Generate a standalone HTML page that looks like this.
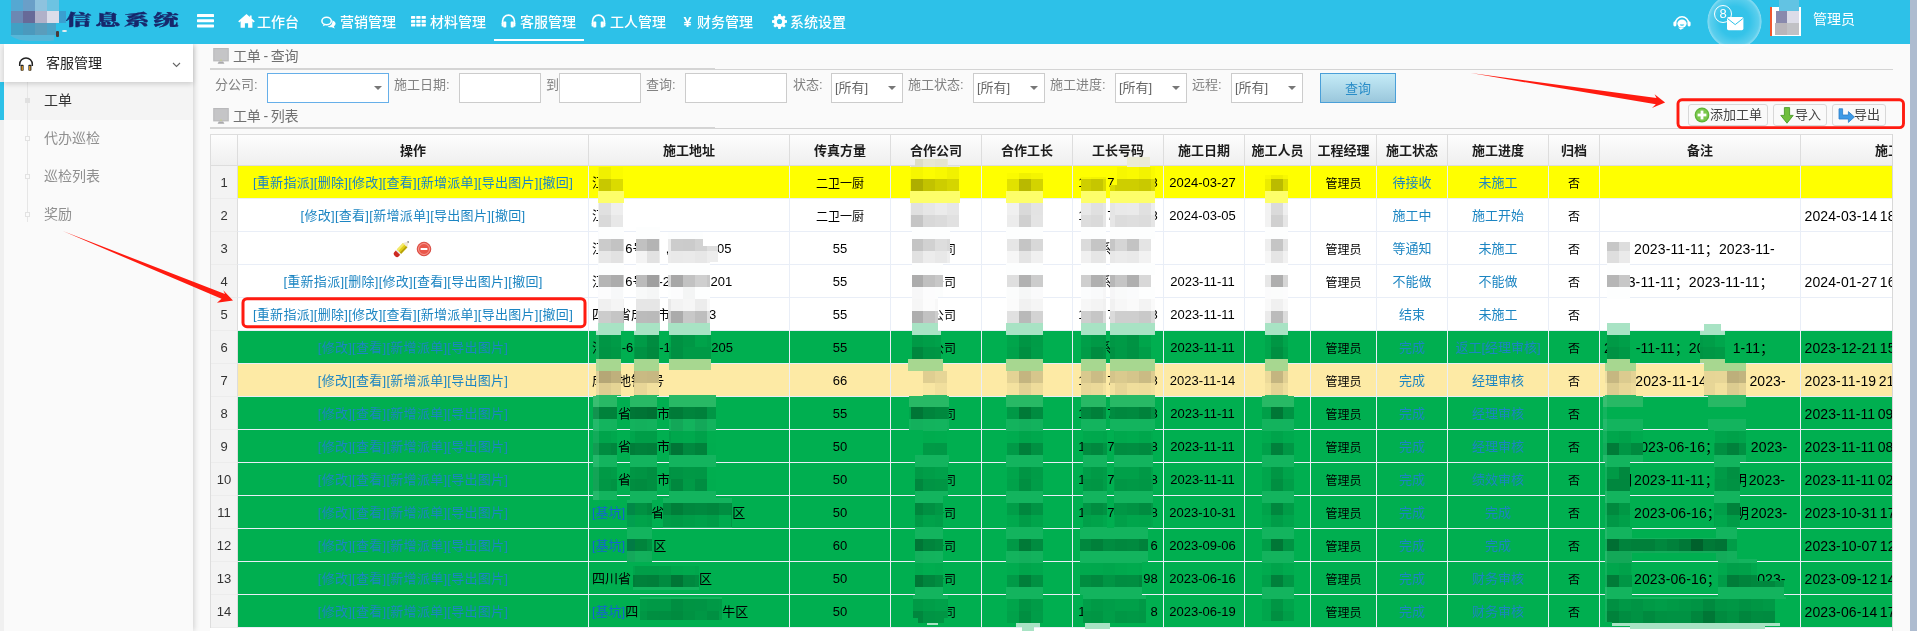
<!DOCTYPE html>
<html lang="zh-CN">
<head>
<meta charset="utf-8">
<title>信息系统</title>
<style>
*{box-sizing:border-box;margin:0;padding:0}
html,body{width:1917px;height:631px;overflow:hidden;background:#fafafa}
body{will-change:transform;position:relative;font-family:"Liberation Sans","Noto Sans CJK SC",sans-serif;font-size:12px;color:#000}
a{color:#1c85c2;text-decoration:none}
.abs{position:absolute}
/* ---------- header ---------- */
#hd{position:absolute;left:0;top:0;width:1910px;height:44px;background:#2dc1e8;z-index:5}
#sb-strip{position:absolute;left:1910px;top:0;width:7px;height:631px;background:#aebcd0}
#logo-t{position:absolute;left:66px;top:7px;font-family:"Noto Serif CJK SC","Liberation Serif",serif;font-weight:900;font-size:14.5px;letter-spacing:2.1px;color:#17276b;white-space:nowrap;transform:scaleX(1.75);transform-origin:0 50%;line-height:24px;-webkit-text-stroke:.35px #17276b}
.nav{position:absolute;top:0;height:44px;line-height:44px;color:#fff;font-size:14px;white-space:nowrap}
.nav svg{position:absolute;top:14px}
.nav span{position:absolute;top:-.5px;font-weight:500}
#nav-ul{position:absolute;left:494px;top:39px;width:90px;height:2px;background:#fff}
/* ---------- sidebar ---------- */
#side{position:absolute;left:0;top:44px;width:193px;height:587px;background:#fafafa;box-shadow:1px 0 6px rgba(0,0,0,.18)}
#side-l{position:absolute;left:0;top:0;width:4px;height:587px;background:#f0f0f0}
#side-p{position:absolute;left:4px;top:0;width:189px;height:38px;background:#fff;box-shadow:0 2px 5px rgba(0,0,0,.16);font-size:14px;line-height:38px;color:#222;z-index:2}
#side-a{position:absolute;left:0;top:38px;width:193px;height:38px;background:#f4f4f4;border-left:4px solid #2dc1e8}
.si{position:absolute;left:44px;font-size:14px;line-height:36px;height:38px;color:#8f8f8f;white-space:nowrap}
.si.on{color:#333}
#tree{position:absolute;left:27px;top:38px;width:1px;height:140px;background:#e6e6e6}
.tb{position:absolute;left:25px;width:5px;height:5px;border:1px solid #e2e2e2;background:#fafafa}
.tb.on{background:#e0e0e0;border-color:#e0e0e0}
/* ---------- content ---------- */
.sec{position:absolute;left:233px;font-size:14px;color:#707070;line-height:20px;white-space:nowrap;word-spacing:-1px;letter-spacing:-.15px}
.hr{position:absolute;left:210px;height:1px;background:#d4d4d4}
.lb{position:absolute;top:73px;height:29px;line-height:23px;font-size:13px;color:#828282;white-space:nowrap}
.ip{position:absolute;top:73px;height:30px;background:#fff;border:1px solid #ccc}
.sel{position:absolute;top:73px;height:30px;background:#fff;border:1px solid #ccc;font-size:13px;color:#666;line-height:27px;padding-left:3px}
.sel:after{content:"";position:absolute;right:6px;top:12px;border:4px solid transparent;border-top:4px solid #777;border-bottom:0}
#btn-q{position:absolute;left:1320px;top:73px;width:76px;height:30px;border:1px solid #4a9fd8;background:linear-gradient(#c4ebf7,#9ac7dc);color:#2a8dc8;font-size:13px;text-align:center;line-height:30px}
.tbtn{position:absolute;top:104px;height:22px;border:1px solid #d8d8d8;border-radius:3px;background:#fafafa;font-size:13px;color:#444;line-height:20px;white-space:nowrap}
/* ---------- grid ---------- */
#gridwrap{position:absolute;left:210px;top:134px;width:1683px;height:497px;overflow:hidden;background:#fff;border-right:1px solid #d8d8d8}
.grid{width:1900px;border-left:1px solid #ddd;border-top:1px solid #ddd}
.hr0,.tr{display:flex;white-space:nowrap}
.hr0{height:31px;background:linear-gradient(#fdfdfd,#efefef);border-bottom:1px solid #ddd}
.hc{height:30px;line-height:31px;text-align:center;font-weight:bold;font-size:13px;color:#1c1c1c;border-right:1px solid #ddd;flex:none;overflow:hidden}
.hc.c-n{width:27px}
.tr{height:33px}
.td{position:relative;height:33px;line-height:34px;border-right:1px solid #e9eef7;border-bottom:1px solid #e9eef7;flex:none;overflow:hidden;text-align:center;font-size:12px;padding:0 4px}
.td a{font-size:13px}
.td.c-n{background:#f3f3f3;color:#333;border-right:1px solid #ddd;border-bottom-color:#ececec;padding:0;font-size:13px}
.td.c-addr,.td.c-bz,.td.c-t2{text-align:left}
.td.c-addr{font-size:13px;padding-left:3px}
.td.c-fz,.td.c-date,.td.c-tel{font-size:13px}
.td.c-bz,.td.c-t2{font-size:14px;letter-spacing:.12px}
.td.c-t2{word-spacing:-1.6px;padding-left:3.5px}
.td.c-jl,.td.c-gd,.td.c-co,.td.c-gz,.td.c-ry{line-height:36px}
.td.c-gz{padding:0 6px 0 4px}
.td.c-date{padding:0 6px 0 3px}
.td.c-fz b{position:relative;top:1px}
.td.c-fz b{font-weight:normal;font-size:12px}
.td a.bk{color:#1464d2}
.td.c-op a{letter-spacing:.28px}
.r-w .td{background:#fff}
.r-y .td{background:#ffff00}
.r-g .td{background:#00af50}
.r-b .td{background:#fdeaa5}
.tr .td.c-n{background:#f3f3f3}
.sp{display:inline-block;height:1px}
/* mosaic */
.mz{position:absolute}
.ic-p{position:absolute;left:154.5px;top:8.5px}
.ic-m{position:absolute;left:178.1px;top:9px}
#mz{position:absolute;left:0;top:0;width:1917px;height:631px;overflow:hidden;pointer-events:none;z-index:6}
#mz i{position:absolute;display:block}

</style>
</head>
<body>
<div id="hd">
  <!-- logo mosaic -->
  <div class="abs" style="left:8px;top:0;width:52px;height:41px;overflow:hidden;border-radius:0 0 10px 22px/0 0 8px 10px">
    <i class="abs" style="left:3px;top:0;width:12px;height:11px;background:#55a8d2"></i><i class="abs" style="left:15px;top:0;width:12px;height:11px;background:#6a9fc8"></i><i class="abs" style="left:27px;top:0;width:12px;height:11px;background:#8ec2de"></i><i class="abs" style="left:39px;top:0;width:12px;height:11px;background:#6dc3e2"></i>
    <i class="abs" style="left:3px;top:11px;width:12px;height:12px;background:#6c88b3"></i><i class="abs" style="left:15px;top:11px;width:12px;height:12px;background:#676a98"></i><i class="abs" style="left:27px;top:11px;width:12px;height:12px;background:#b1b1c9"></i><i class="abs" style="left:39px;top:11px;width:12px;height:12px;background:#dcdde9"></i>
    <i class="abs" style="left:3px;top:23px;width:12px;height:12px;background:#41a0c4"></i><i class="abs" style="left:15px;top:23px;width:12px;height:12px;background:#4b99bd"></i><i class="abs" style="left:27px;top:23px;width:12px;height:12px;background:#5a9dbc"></i><i class="abs" style="left:39px;top:23px;width:9px;height:12px;background:#4ca4c8"></i>
    <i class="abs" style="left:0;top:35px;width:46px;height:6px;background:#56b7d9"></i>
  </div>
  <i class="abs" style="left:59px;top:11px;width:7px;height:12px;background:#3a9fd0"></i>
  <i class="abs" style="left:56px;top:31px;width:3px;height:6px;background:#4a3a3a;border-radius:1px"></i>
  <i class="abs" style="left:62px;top:29.5px;width:5px;height:2.5px;background:#e6eef0;border-radius:50%"></i>
  <div id="logo-t">信息系统</div>
  <!-- hamburger -->
  <svg class="abs" style="left:197px;top:14px" width="17" height="14" viewBox="0 0 17 14"><rect x="0" y="0" width="17" height="3" rx=".6" fill="#fff"/><rect x="0" y="5.2" width="17" height="3" rx=".6" fill="#fff"/><rect x="0" y="10.4" width="17" height="3" rx=".6" fill="#fff"/></svg>
  <!-- nav -->
  <div class="nav" style="left:231px;width:76px">
    <svg style="left:7px;top:14px" width="17" height="14" viewBox="0 0 17 14"><path d="M8.5 0 L0.2 7.3 L1.3 8.4 L2.6 7.3 L2.6 13.7 L6.9 13.7 L6.9 9.3 L10.1 9.3 L10.1 13.7 L14.4 13.7 L14.4 7.3 L15.7 8.4 L16.8 7.3 L13.6 4.5 L13.6 1.4 L11.8 1.4 L11.8 2.9 Z" fill="#fff"/></svg>
    <span style="left:26px">工作台</span></div>
  <div class="nav" style="left:314px;width:90px">
    <svg style="left:7px;top:16px" width="15" height="13" viewBox="0 0 15 13"><ellipse cx="5.6" cy="5" rx="4.7" ry="3.7" fill="none" stroke="#fff" stroke-width="1.5"/><path d="M3 8 L1.6 10.6 L5.4 8.6 Z" fill="#fff"/><path d="M11.2 4.2 C13.4 4.9 14.6 6.2 14.6 7.6 C14.6 8.7 13.9 9.7 12.8 10.4 L13.9 12.4 L10.8 11.2 C9.2 11.5 7.6 11.2 6.6 10.4 C9.6 10.1 12 8 11.2 4.2 Z" fill="#fff"/></svg>
    <span style="left:26px">营销管理</span></div>
  <div class="nav" style="left:404px;width:90px">
    <svg style="left:7px;top:16px" width="15" height="11" viewBox="0 0 15 11"><g fill="#fff"><rect x="0" y="0" width="4.2" height="2.8" rx=".5"/><rect x="5.3" y="0" width="4.2" height="2.8" rx=".5"/><rect x="10.6" y="0" width="4.2" height="2.8" rx=".5"/><rect x="0" y="3.9" width="4.2" height="2.8" rx=".5"/><rect x="5.3" y="3.9" width="4.2" height="2.8" rx=".5"/><rect x="10.6" y="3.9" width="4.2" height="2.8" rx=".5"/><rect x="0" y="7.8" width="4.2" height="2.8" rx=".5"/><rect x="5.3" y="7.8" width="4.2" height="2.8" rx=".5"/><rect x="10.6" y="7.8" width="4.2" height="2.8" rx=".5"/></g></svg>
    <span style="left:26px">材料管理</span></div>
  <div class="nav" style="left:494px;width:90px">
    <svg style="left:7px;top:14px" width="15" height="14" viewBox="0 0 15 14"><path d="M1.6 9 V7 A5.9 5.9 0 0 1 13.4 7 V9" fill="none" stroke="#fff" stroke-width="1.7"/><rect x="2.2" y="7.6" width="3.1" height="6" rx=".8" fill="#fff"/><rect x="9.7" y="7.6" width="3.1" height="6" rx=".8" fill="#fff"/><rect x=".6" y="8.4" width="1.8" height="4.2" rx=".9" fill="#fff"/><rect x="12.6" y="8.4" width="1.8" height="4.2" rx=".9" fill="#fff"/></svg>
    <span style="left:26px">客服管理</span></div>
  <div class="nav" style="left:584px;width:90px">
    <svg style="left:7px;top:14px" width="15" height="14" viewBox="0 0 15 14"><path d="M1.6 9 V7 A5.9 5.9 0 0 1 13.4 7 V9" fill="none" stroke="#fff" stroke-width="1.7"/><rect x="2.2" y="7.6" width="3.1" height="6" rx=".8" fill="#fff"/><rect x="9.7" y="7.6" width="3.1" height="6" rx=".8" fill="#fff"/><rect x=".6" y="8.4" width="1.8" height="4.2" rx=".9" fill="#fff"/><rect x="12.6" y="8.4" width="1.8" height="4.2" rx=".9" fill="#fff"/></svg>
    <span style="left:26px">工人管理</span></div>
  <div class="nav" style="left:674px;width:87px">
    <span style="left:9.5px;font-weight:bold;font-size:14.5px">¥</span>
    <span style="left:23px">财务管理</span></div>
  <div class="nav" style="left:761px;width:90px">
    <svg style="left:11px;top:14px" width="15" height="15" viewBox="0 0 15 15"><path fill="#fff" fill-rule="evenodd" d="M6.3 0 H8.7 L9.1 2 L10.3 2.5 L12 1.4 L13.6 3 L12.5 4.7 L13 5.9 L15 6.3 V8.7 L13 9.1 L12.5 10.3 L13.6 12 L12 13.6 L10.3 12.5 L9.1 13 L8.7 15 H6.3 L5.9 13 L4.7 12.5 L3 13.6 L1.4 12 L2.5 10.3 L2 9.1 L0 8.7 V6.3 L2 5.9 L2.5 4.7 L1.4 3 L3 1.4 L4.7 2.5 L5.9 2 Z M7.5 4.9 A2.6 2.6 0 1 0 7.5 10.1 A2.6 2.6 0 1 0 7.5 4.9 Z"/></svg>
    <span style="left:29px">系统设置</span></div>
  <div id="nav-ul"></div>

  <!-- right side -->
  <svg class="abs" style="left:1673px;top:15px" width="18" height="16" viewBox="0 0 18 16"><path d="M2.4 8.4 A6.6 6.6 0 0 1 15.6 8.4" fill="none" stroke="#fff" stroke-width="1.6"/><ellipse cx="9" cy="8.6" rx="4.6" ry="4.2" fill="#fff"/><rect x=".4" y="6.4" width="3" height="5" rx="1.4" fill="#fff"/><rect x="14.6" y="6.4" width="3" height="5" rx="1.4" fill="#fff"/><path d="M6.6 9.6 A2.6 2 0 0 0 11.4 9.6 Z" fill="#2dc1e8"/><path d="M5 12.4 L7.6 14.8 L11 13 Z" fill="#fff"/></svg>
  <div class="abs" style="left:1707px;top:-6px;width:55px;height:55px;border-radius:50%;background:radial-gradient(circle closest-side,rgba(255,255,255,0) 0%,rgba(255,255,255,.04) 55%,rgba(255,255,255,.22) 88%,rgba(255,255,255,.42) 97%,rgba(255,255,255,0) 100%)"></div>
  <div class="abs" style="left:1714px;top:5px;width:18px;height:18px;border:1px solid #fff;border-radius:50%;color:#fff;font-size:13px;line-height:16px;text-align:center">8</div>
  <svg class="abs" style="left:1727px;top:17px" width="17" height="14" viewBox="0 0 17 14"><rect x="0" y="0" width="16.4" height="13.2" rx="1.6" fill="#fff"/><path d="M.6 1.6 L8.2 7.6 L15.8 1.6" fill="none" stroke="#2dc1e8" stroke-width="1"/></svg>
  <!-- avatar -->
  <div class="abs" style="left:1770px;top:7px;width:31px;height:29px;background:#fff;border-left:2px solid #f0562e"></div>
  <div class="abs" style="left:1779px;top:0;width:20px;height:11px;background:#62c3e3"></div>
  <div class="abs" style="left:1776px;top:11px;width:11px;height:12px;background:#8989ad"></div>
  <div class="abs" style="left:1787px;top:11px;width:12px;height:12px;background:#dcdce8"></div>
  <div class="abs" style="left:1775px;top:23px;width:12px;height:12px;background:#b9b5ba"></div>
  <div class="abs" style="left:1787px;top:23px;width:12px;height:12px;background:#c1c1c5"></div>
  <div class="abs" style="left:1813px;top:9px;font-size:14px;line-height:20px;color:#fff;white-space:nowrap">管理员</div>
</div>
<div id="sb-strip"></div>

<!-- sidebar -->
<div id="side">
  <div id="side-l"></div>
  <div id="side-a"></div>
  <div id="tree"></div>
  <div class="tb on" style="top:54px"></div>
  <div class="tb" style="top:92px"></div>
  <div class="tb" style="top:130px"></div>
  <div class="tb" style="top:168px"></div>
  <div class="si on" style="top:38px">工单</div>
  <div class="si" style="top:76px">代办巡检</div>
  <div class="si" style="top:114px">巡检列表</div>
  <div class="si" style="top:152px">奖励</div>
  <div id="side-p">
    <svg class="abs" style="left:14px;top:13px" width="16" height="14" viewBox="0 0 16 14"><path d="M1.7 9 V7.2 A6.3 6.3 0 0 1 14.3 7.2 V9" fill="none" stroke="#222" stroke-width="1.5"/><rect x="2.6" y="7.8" width="3" height="6" rx=".7" fill="#222"/><rect x="10.4" y="7.8" width="3" height="6" rx=".7" fill="#222"/><rect x="3.6" y="9" width="1.2" height="4.4" fill="#f5a623"/><rect x="11.2" y="9" width="1.2" height="4.4" fill="#f5a623"/></svg>
    <span class="abs" style="left:42px;top:0">客服管理</span>
    <svg class="abs" style="left:168px;top:18px" width="9" height="6" viewBox="0 0 9 6"><path d="M1 1 L4.5 4.5 L8 1" fill="none" stroke="#666" stroke-width="1.1"/></svg>
  </div>
</div>

<!-- content -->
<svg class="abs" style="left:213px;top:48px" width="17" height="17" viewBox="0 0 17 17"><rect x=".2" y="0" width="15.6" height="13.4" fill="#b9b9bb"/><rect x="1.3" y="1.1" width="13.4" height="11.2" fill="#c5c5c7"/><rect x="7.4" y="11.6" width="1.2" height="1" fill="#c9d36a"/><path d="M5.8 13.4 H10.2 L11.4 15.7 H4.6 Z" fill="#a9a9ab"/></svg>
<div class="sec" style="top:46px">工单 - 查询</div>
<div class="hr" style="top:68px;width:505px;height:2px"></div>
<div class="hr" style="top:69px;width:1683px"></div>

<div class="lb" style="left:215px">分公司:</div>
<div class="ip" style="left:267px;width:122px;border-color:#66afe9"><i class="abs" style="right:6px;top:12px;border:4px solid transparent;border-top:4px solid #777;border-bottom:0"></i></div>
<div class="lb" style="left:394px">施工日期:</div>
<div class="ip" style="left:459px;width:82px"></div>
<div class="lb" style="left:546px">到</div>
<div class="ip" style="left:559px;width:82px"></div>
<div class="lb" style="left:646px">查询:</div>
<div class="ip" style="left:685px;width:102px"></div>
<div class="lb" style="left:793px">状态:</div>
<div class="sel" style="left:831px;width:72px">[所有]</div>
<div class="lb" style="left:908px">施工状态:</div>
<div class="sel" style="left:973px;width:72px">[所有]</div>
<div class="lb" style="left:1050px">施工进度:</div>
<div class="sel" style="left:1115px;width:72px">[所有]</div>
<div class="lb" style="left:1192px">远程:</div>
<div class="sel" style="left:1231px;width:72px">[所有]</div>
<div id="btn-q">查询</div>

<svg class="abs" style="left:213px;top:108px" width="17" height="17" viewBox="0 0 17 17"><rect x=".2" y="0" width="15.6" height="13.4" fill="#b9b9bb"/><rect x="1.3" y="1.1" width="13.4" height="11.2" fill="#c5c5c7"/><rect x="7.4" y="11.6" width="1.2" height="1" fill="#c9d36a"/><path d="M5.8 13.4 H10.2 L11.4 15.7 H4.6 Z" fill="#a9a9ab"/></svg>
<div class="sec" style="top:106px">工单 - 列表</div>
<div class="hr" style="top:127px;width:505px;height:2px"></div>
<div class="hr" style="top:128px;width:1683px"></div>

<!-- toolbar -->
<div class="tbtn" style="left:1688px;width:80px">
  <svg class="abs" style="left:5px;top:2px" width="16" height="16" viewBox="0 0 16 16"><circle cx="8" cy="8" r="7.4" fill="#5fb336"/><circle cx="8" cy="8" r="6.2" fill="#7bc74d"/><rect x="3.6" y="6.6" width="8.8" height="2.8" fill="#fff"/><rect x="6.6" y="3.6" width="2.8" height="8.8" fill="#fff"/></svg>
  <span class="abs" style="left:21px;top:0">添加工单</span></div>
<div class="tbtn" style="left:1773px;width:54px">
  <svg class="abs" style="left:6px;top:2px" width="14" height="17" viewBox="0 0 14 17"><path d="M4.4 .6 H9.6 V8.4 H13.2 L7 16.2 L.8 8.4 H4.4 Z" fill="#6fbf3c" stroke="#4c9a2a" stroke-width=".9"/></svg>
  <span class="abs" style="left:21px;top:0">导入</span></div>
<div class="tbtn" style="left:1832px;width:54px">
  <svg class="abs" style="left:5px;top:3px" width="17" height="15" viewBox="0 0 17 15"><path d="M1 .8 H4.6 V7 H10.4 V3.6 L16.4 9 L10.4 14.4 V11 H1 Z" fill="#3f9be6" stroke="#2b7fc9" stroke-width=".8"/></svg>
  <span class="abs" style="left:21px;top:0">导出</span></div>

<!-- grid -->
<div id="gridwrap">
<div class="grid">
<div class="hr0">
<div class="hc c-n" style="width:27px"></div>
<div class="hc c-op" style="width:351px">操作</div>
<div class="hc c-addr" style="width:201px">施工地址</div>
<div class="hc c-fz" style="width:101px">传真方量</div>
<div class="hc c-co" style="width:91px">合作公司</div>
<div class="hc c-gz" style="width:91px">合作工长</div>
<div class="hc c-tel" style="width:91px">工长号码</div>
<div class="hc c-date" style="width:81px">施工日期</div>
<div class="hc c-ry" style="width:66px">施工人员</div>
<div class="hc c-jl" style="width:66px">工程经理</div>
<div class="hc c-zt" style="width:71px">施工状态</div>
<div class="hc c-jd" style="width:101px">施工进度</div>
<div class="hc c-gd" style="width:51px">归档</div>
<div class="hc c-bz" style="width:201px">备注</div>
<div class="hc c-t2" style="width:201px">施工时间</div>
</div>
<div class="tr r-y">
<div class="td c-n" style="width:27px">1</div>
<div class="td c-op" style="width:351px"><a>[重新指派][删除][修改][查看][新增派单][导出图片][撤回]</a></div>
<div class="td c-addr" style="width:201px">江<i class="sp" style="width:13.02px"></i></div>
<div class="td c-fz" style="width:101px"><b>二卫一厨</b></div>
<div class="td c-co" style="width:91px"><i class="sp" style="width:24.02px"></i>公司<i class="sp" style="width:8px"></i></div>
<div class="td c-gz" style="width:91px"><i class="sp" style="width:24.02px"></i></div>
<div class="td c-tel" style="width:91px">1<i class="sp" style="width:21.7px"></i>7<i class="sp" style="width:36.16px"></i>8</div>
<div class="td c-date" style="width:81px">2024-03-27</div>
<div class="td c-ry" style="width:66px"><i class="sp" style="width:24.02px"></i></div>
<div class="td c-jl" style="width:66px">管理员</div>
<div class="td c-zt" style="width:71px"><a>待接收</a></div>
<div class="td c-jd" style="width:101px"><a>未施工</a></div>
<div class="td c-gd" style="width:51px">否</div>
<div class="td c-bz" style="width:201px"></div>
<div class="td c-t2" style="width:201px"></div>
</div>
<div class="tr r-w">
<div class="td c-n" style="width:27px">2</div>
<div class="td c-op" style="width:351px"><a>[修改][查看][新增派单][导出图片][撤回]</a></div>
<div class="td c-addr" style="width:201px">江<i class="sp" style="width:13.02px"></i></div>
<div class="td c-fz" style="width:101px"><b>二卫一厨</b></div>
<div class="td c-co" style="width:91px"><i class="sp" style="width:24.02px"></i>公司<i class="sp" style="width:8px"></i></div>
<div class="td c-gz" style="width:91px"><i class="sp" style="width:24.02px"></i></div>
<div class="td c-tel" style="width:91px">1<i class="sp" style="width:21.7px"></i>7<i class="sp" style="width:36.16px"></i>8</div>
<div class="td c-date" style="width:81px">2024-03-05</div>
<div class="td c-ry" style="width:66px"><i class="sp" style="width:24.02px"></i></div>
<div class="td c-jl" style="width:66px"></div>
<div class="td c-zt" style="width:71px"><a>施工中</a></div>
<div class="td c-jd" style="width:101px"><a>施工开始</a></div>
<div class="td c-gd" style="width:51px">否</div>
<div class="td c-bz" style="width:201px"></div>
<div class="td c-t2" style="width:201px">2024-03-14 18:20</div>
</div>
<div class="tr r-w">
<div class="td c-n" style="width:27px">3</div>
<div class="td c-op" style="width:351px"><svg class="ic-p" width="16" height="17" viewBox="0 0 16 17"><g transform="translate(3,13.8) rotate(43.5)"><path d="M-3 -3 V-.6 A3 2.2 0 0 0 3 -.6 V-3 Z" fill="#cc2b22"/><rect x="-3" y="-4.4" width="6" height="1.4" fill="#e6e6e6"/><rect x="-3" y="-13.4" width="6" height="9" fill="#e3cf1c"/><rect x="-3" y="-13.4" width="2" height="9" fill="#f4ea6a"/><rect x="1.2" y="-13.4" width="1.8" height="9" fill="#b5a10c"/><path d="M-3 -13.4 L0 -18.6 L3 -13.4 Z" fill="#efe7da"/><path d="M-.9 -17 L0 -18.6 L.9 -17 Z" fill="#444"/></g></svg><svg class="ic-m" width="16" height="16" viewBox="0 0 16 16"><circle cx="8" cy="8" r="6.8" fill="#e9564a"/><circle cx="8" cy="8" r="5.5" fill="none" stroke="#f7a29a" stroke-width=".9"/><circle cx="8" cy="8" r="6.8" fill="none" stroke="#d2362c" stroke-width=".8"/><rect x="4.6" y="6.9" width="6.8" height="2.2" rx=".4" fill="#fff"/></svg>
</div>
<div class="td c-addr" style="width:201px">江<i class="sp" style="width:20.23px"></i>6号<i class="sp" style="width:20.23px"></i>,<i class="sp" style="width:47.7px"></i>05</div>
<div class="td c-fz" style="width:101px">55</div>
<div class="td c-co" style="width:91px"><i class="sp" style="width:24.02px"></i>公司<i class="sp" style="width:8px"></i></div>
<div class="td c-gz" style="width:91px"><i class="sp" style="width:24.02px"></i></div>
<div class="td c-tel" style="width:91px"><i class="sp" style="width:13.02px"></i>系<i class="sp" style="width:39.02px"></i></div>
<div class="td c-date" style="width:81px"></div>
<div class="td c-ry" style="width:66px"><i class="sp" style="width:24.02px"></i></div>
<div class="td c-jl" style="width:66px">管理员</div>
<div class="td c-zt" style="width:71px"><a>等通知</a></div>
<div class="td c-jd" style="width:101px"><a>未施工</a></div>
<div class="td c-gd" style="width:51px">否</div>
<div class="td c-bz" style="width:201px"><i class="sp" style="width:28.25px"></i><i class="sp" style="width:1.8px"></i>2023-11-11；2023-11-</div>
<div class="td c-t2" style="width:201px"></div>
</div>
<div class="tr r-w">
<div class="td c-n" style="width:27px">4</div>
<div class="td c-op" style="width:351px"><a>[重新指派][删除][修改][查看][导出图片][撤回]</a></div>
<div class="td c-addr" style="width:201px">江<i class="sp" style="width:20.23px"></i>6号<i class="sp" style="width:13.02px"></i>-2<i class="sp" style="width:40.47px"></i>201</div>
<div class="td c-fz" style="width:101px">55</div>
<div class="td c-co" style="width:91px"><i class="sp" style="width:24.02px"></i>公司<i class="sp" style="width:8px"></i></div>
<div class="td c-gz" style="width:91px"><i class="sp" style="width:24.02px"></i></div>
<div class="td c-tel" style="width:91px"><i class="sp" style="width:13.02px"></i>系<i class="sp" style="width:39.02px"></i></div>
<div class="td c-date" style="width:81px">2023-11-11</div>
<div class="td c-ry" style="width:66px"><i class="sp" style="width:24.02px"></i></div>
<div class="td c-jl" style="width:66px">管理员</div>
<div class="td c-zt" style="width:71px"><a>不能做</a></div>
<div class="td c-jd" style="width:101px"><a>不能做</a></div>
<div class="td c-gd" style="width:51px">否</div>
<div class="td c-bz" style="width:201px"><i class="sp" style="width:23.72px"></i>3-11-11；2023-11-11；</div>
<div class="td c-t2" style="width:201px">2024-01-27 16:20</div>
</div>
<div class="tr r-w">
<div class="td c-n" style="width:27px">5</div>
<div class="td c-op" style="width:351px"><a>[重新指派][删除][修改][查看][新增派单][导出图片][撤回]</a></div>
<div class="td c-addr" style="width:201px">四<i class="sp" style="width:13.02px"></i>省成<i class="sp" style="width:13.02px"></i>市<i class="sp" style="width:39.02px"></i>3</div>
<div class="td c-fz" style="width:101px">55</div>
<div class="td c-co" style="width:91px"><i class="sp" style="width:24.02px"></i>公司<i class="sp" style="width:8px"></i></div>
<div class="td c-gz" style="width:91px"><i class="sp" style="width:24.02px"></i></div>
<div class="td c-tel" style="width:91px">1<i class="sp" style="width:21.7px"></i>7<i class="sp" style="width:36.16px"></i>8</div>
<div class="td c-date" style="width:81px">2023-11-11</div>
<div class="td c-ry" style="width:66px"><i class="sp" style="width:24.02px"></i></div>
<div class="td c-jl" style="width:66px"></div>
<div class="td c-zt" style="width:71px"><a>结束</a></div>
<div class="td c-jd" style="width:101px"><a>未施工</a></div>
<div class="td c-gd" style="width:51px">否</div>
<div class="td c-bz" style="width:201px"></div>
<div class="td c-t2" style="width:201px"></div>
</div>
<div class="tr r-g">
<div class="td c-n" style="width:27px">6</div>
<div class="td c-op" style="width:351px"><a>[修改][查看][新增派单][导出图片]</a></div>
<div class="td c-addr" style="width:201px">江<i class="sp" style="width:16.62px"></i>-6号<i class="sp" style="width:13.02px"></i>-1<i class="sp" style="width:40.47px"></i>205</div>
<div class="td c-fz" style="width:101px">55</div>
<div class="td c-co" style="width:91px"><i class="sp" style="width:24.02px"></i>公司<i class="sp" style="width:8px"></i></div>
<div class="td c-gz" style="width:91px"><i class="sp" style="width:24.02px"></i></div>
<div class="td c-tel" style="width:91px"><i class="sp" style="width:13.02px"></i>系<i class="sp" style="width:39.02px"></i></div>
<div class="td c-date" style="width:81px">2023-11-11</div>
<div class="td c-ry" style="width:66px"><i class="sp" style="width:24.02px"></i></div>
<div class="td c-jl" style="width:66px">管理员</div>
<div class="td c-zt" style="width:71px"><a>完成</a></div>
<div class="td c-jd" style="width:101px"><a>返工[经理审核]</a></div>
<div class="td c-gd" style="width:51px">否</div>
<div class="td c-bz" style="width:201px">2<i class="sp" style="width:23.72px"></i>-11-11；20<i class="sp" style="width:27.98px"></i>1-11；</div>
<div class="td c-t2" style="width:201px">2023-12-21 15:20</div>
</div>
<div class="tr r-b">
<div class="td c-n" style="width:27px">7</div>
<div class="td c-op" style="width:351px"><a>[修改][查看][新增派单][导出图片]</a></div>
<div class="td c-addr" style="width:201px">成<i class="sp" style="width:13.02px"></i>地铁<i class="sp" style="width:7.23px"></i>号</div>
<div class="td c-fz" style="width:101px">66</div>
<div class="td c-co" style="width:91px"><i class="sp" style="width:24.02px"></i></div>
<div class="td c-gz" style="width:91px"><i class="sp" style="width:24.02px"></i></div>
<div class="td c-tel" style="width:91px">1<i class="sp" style="width:21.7px"></i>7<i class="sp" style="width:36.16px"></i>8</div>
<div class="td c-date" style="width:81px">2023-11-14</div>
<div class="td c-ry" style="width:66px"><i class="sp" style="width:24.02px"></i></div>
<div class="td c-jl" style="width:66px">管理员</div>
<div class="td c-zt" style="width:71px"><a>完成</a></div>
<div class="td c-jd" style="width:101px"><a>经理审核</a></div>
<div class="td c-gd" style="width:51px">否</div>
<div class="td c-bz" style="width:201px"><i class="sp" style="width:28.25px"></i><i class="sp" style="width:3px"></i>2023-11-14<i class="sp" style="width:42.38px"></i>2023-</div>
<div class="td c-t2" style="width:201px">2023-11-19 21:20</div>
</div>
<div class="tr r-g">
<div class="td c-n" style="width:27px">8</div>
<div class="td c-op" style="width:351px"><a>[修改][查看][新增派单][导出图片]</a></div>
<div class="td c-addr" style="width:201px"><i class="sp" style="width:26.02px"></i>省成<i class="sp" style="width:13.02px"></i>市<i class="sp" style="width:39.02px"></i>2</div>
<div class="td c-fz" style="width:101px">55</div>
<div class="td c-co" style="width:91px"><i class="sp" style="width:24.02px"></i>公司<i class="sp" style="width:8px"></i></div>
<div class="td c-gz" style="width:91px"><i class="sp" style="width:24.02px"></i></div>
<div class="td c-tel" style="width:91px">1<i class="sp" style="width:21.7px"></i>7<i class="sp" style="width:36.16px"></i>8</div>
<div class="td c-date" style="width:81px">2023-11-11</div>
<div class="td c-ry" style="width:66px"><i class="sp" style="width:24.02px"></i></div>
<div class="td c-jl" style="width:66px">管理员</div>
<div class="td c-zt" style="width:71px"><a>完成</a></div>
<div class="td c-jd" style="width:101px"><a>经理审核</a></div>
<div class="td c-gd" style="width:51px">否</div>
<div class="td c-bz" style="width:201px"></div>
<div class="td c-t2" style="width:201px">2023-11-11 09:20</div>
</div>
<div class="tr r-g">
<div class="td c-n" style="width:27px">9</div>
<div class="td c-op" style="width:351px"><a>[修改][查看][新增派单][导出图片]</a></div>
<div class="td c-addr" style="width:201px"><i class="sp" style="width:26.02px"></i>省成<i class="sp" style="width:13.02px"></i>市<i class="sp" style="width:39.02px"></i></div>
<div class="td c-fz" style="width:101px">50</div>
<div class="td c-co" style="width:91px"><i class="sp" style="width:24.02px"></i></div>
<div class="td c-gz" style="width:91px"><i class="sp" style="width:24.02px"></i></div>
<div class="td c-tel" style="width:91px">1<i class="sp" style="width:21.7px"></i>7<i class="sp" style="width:36.16px"></i>8</div>
<div class="td c-date" style="width:81px">2023-11-11</div>
<div class="td c-ry" style="width:66px"><i class="sp" style="width:24.02px"></i></div>
<div class="td c-jl" style="width:66px">管理员</div>
<div class="td c-zt" style="width:71px"><a>完成</a></div>
<div class="td c-jd" style="width:101px"><a>经理审核</a></div>
<div class="td c-gd" style="width:51px">否</div>
<div class="td c-bz" style="width:201px"><i class="sp" style="width:36.16px"></i>023-06-16；<i class="sp" style="width:28.25px"></i><i class="sp" style="width:3.4px"></i>2023-</div>
<div class="td c-t2" style="width:201px">2023-11-11 08:20</div>
</div>
<div class="tr r-g">
<div class="td c-n" style="width:27px">10</div>
<div class="td c-op" style="width:351px"><a>[修改][查看][新增派单][导出图片]</a></div>
<div class="td c-addr" style="width:201px"><i class="sp" style="width:26.02px"></i>省<i class="sp" style="width:13.02px"></i>都市<i class="sp" style="width:39.02px"></i></div>
<div class="td c-fz" style="width:101px">50</div>
<div class="td c-co" style="width:91px"><i class="sp" style="width:24.02px"></i>公司<i class="sp" style="width:8px"></i></div>
<div class="td c-gz" style="width:91px"><i class="sp" style="width:24.02px"></i></div>
<div class="td c-tel" style="width:91px">1<i class="sp" style="width:21.7px"></i>7<i class="sp" style="width:36.16px"></i>8</div>
<div class="td c-date" style="width:81px">2023-11-11</div>
<div class="td c-ry" style="width:66px"><i class="sp" style="width:24.02px"></i></div>
<div class="td c-jl" style="width:66px">管理员</div>
<div class="td c-zt" style="width:71px"><a>完成</a></div>
<div class="td c-jd" style="width:101px"><a>绩效审核</a></div>
<div class="td c-gd" style="width:51px">否</div>
<div class="td c-bz" style="width:201px"><i class="sp" style="width:14.12px"></i>明<i class="sp" style="width:1.8px"></i>2023-11-11；<i class="sp" style="width:14.12px"></i>明<i class="sp" style="width:1.6px"></i>2023-</div>
<div class="td c-t2" style="width:201px">2023-11-11 02:20</div>
</div>
<div class="tr r-g">
<div class="td c-n" style="width:27px">11</div>
<div class="td c-op" style="width:351px"><a>[修改][查看][新增派单][导出图片]</a></div>
<div class="td c-addr" style="width:201px"><a class="bk">[基坑]</a><i class="sp" style="width:26.02px"></i>省<i class="sp" style="width:65.02px"></i><i class="sp" style="width:3px"></i>区</div>
<div class="td c-fz" style="width:101px">50</div>
<div class="td c-co" style="width:91px"><i class="sp" style="width:24.02px"></i>公司<i class="sp" style="width:8px"></i></div>
<div class="td c-gz" style="width:91px"><i class="sp" style="width:24.02px"></i></div>
<div class="td c-tel" style="width:91px">1<i class="sp" style="width:21.7px"></i>7<i class="sp" style="width:36.16px"></i>8</div>
<div class="td c-date" style="width:81px">2023-10-31</div>
<div class="td c-ry" style="width:66px"><i class="sp" style="width:24.02px"></i></div>
<div class="td c-jl" style="width:66px">管理员</div>
<div class="td c-zt" style="width:71px"><a>完成</a></div>
<div class="td c-jd" style="width:101px"><a>完成</a></div>
<div class="td c-gd" style="width:51px">否</div>
<div class="td c-bz" style="width:201px"><i class="sp" style="width:28.25px"></i><i class="sp" style="width:1.8px"></i>2023-06-16；<i class="sp" style="width:14.12px"></i>明<i class="sp" style="width:1.6px"></i>2023-</div>
<div class="td c-t2" style="width:201px">2023-10-31 17:20</div>
</div>
<div class="tr r-g">
<div class="td c-n" style="width:27px">12</div>
<div class="td c-op" style="width:351px"><a>[修改][查看][新增派单][导出图片]</a></div>
<div class="td c-addr" style="width:201px"><a class="bk">[基坑]</a><i class="sp" style="width:26.02px"></i><i class="sp" style="width:2px"></i>区</div>
<div class="td c-fz" style="width:101px">60</div>
<div class="td c-co" style="width:91px"><i class="sp" style="width:24.02px"></i>公司<i class="sp" style="width:8px"></i></div>
<div class="td c-gz" style="width:91px"><i class="sp" style="width:24.02px"></i></div>
<div class="td c-tel" style="width:91px"><i class="sp" style="width:72.31px"></i>6</div>
<div class="td c-date" style="width:81px">2023-09-06</div>
<div class="td c-ry" style="width:66px"><i class="sp" style="width:24.02px"></i></div>
<div class="td c-jl" style="width:66px">管理员</div>
<div class="td c-zt" style="width:71px"><a>完成</a></div>
<div class="td c-jd" style="width:101px"><a>完成</a></div>
<div class="td c-gd" style="width:51px">否</div>
<div class="td c-bz" style="width:201px"><i class="sp" style="width:127.09px"></i></div>
<div class="td c-t2" style="width:201px">2023-10-07 12:20</div>
</div>
<div class="tr r-g">
<div class="td c-n" style="width:27px">13</div>
<div class="td c-op" style="width:351px"><a>[修改][查看][新增派单][导出图片]</a></div>
<div class="td c-addr" style="width:201px">四川省<i class="sp" style="width:65.02px"></i><i class="sp" style="width:3px"></i>区</div>
<div class="td c-fz" style="width:101px">50</div>
<div class="td c-co" style="width:91px"><i class="sp" style="width:24.02px"></i>公司<i class="sp" style="width:8px"></i></div>
<div class="td c-gz" style="width:91px"><i class="sp" style="width:24.02px"></i></div>
<div class="td c-tel" style="width:91px"><i class="sp" style="width:65.08px"></i>98</div>
<div class="td c-date" style="width:81px">2023-06-16</div>
<div class="td c-ry" style="width:66px"><i class="sp" style="width:24.02px"></i></div>
<div class="td c-jl" style="width:66px">管理员</div>
<div class="td c-zt" style="width:71px"><a>完成</a></div>
<div class="td c-jd" style="width:101px"><a>财务审核</a></div>
<div class="td c-gd" style="width:51px">否</div>
<div class="td c-bz" style="width:201px"><i class="sp" style="width:28.25px"></i><i class="sp" style="width:1.8px"></i>2023-06-16；<i class="sp" style="width:36.16px"></i>023-</div>
<div class="td c-t2" style="width:201px">2023-09-12 14:20</div>
</div>
<div class="tr r-g">
<div class="td c-n" style="width:27px">14</div>
<div class="td c-op" style="width:351px"><a>[修改][查看][新增派单][导出图片]</a></div>
<div class="td c-addr" style="width:201px"><a class="bk">[基坑]</a>四<i class="sp" style="width:78.02px"></i><i class="sp" style="width:6px"></i>牛区</div>
<div class="td c-fz" style="width:101px">50</div>
<div class="td c-co" style="width:91px"><i class="sp" style="width:24.02px"></i>公司<i class="sp" style="width:8px"></i></div>
<div class="td c-gz" style="width:91px"><i class="sp" style="width:24.02px"></i></div>
<div class="td c-tel" style="width:91px">1<i class="sp" style="width:65.08px"></i>8</div>
<div class="td c-date" style="width:81px">2023-06-19</div>
<div class="td c-ry" style="width:66px"><i class="sp" style="width:24.02px"></i></div>
<div class="td c-jl" style="width:66px">管理员</div>
<div class="td c-zt" style="width:71px"><a>完成</a></div>
<div class="td c-jd" style="width:101px"><a>财务审核</a></div>
<div class="td c-gd" style="width:51px">否</div>
<div class="td c-bz" style="width:201px"><i class="sp" style="width:169.45px"></i></div>
<div class="td c-t2" style="width:201px">2023-06-14 17:20</div>
</div>
</div>
</div>

<div id="mz">
<i style="left:598px;top:167px;width:1px;height:12px;background:#f4f415"></i>
<i style="left:599px;top:167px;width:12px;height:12px;background:#f0f000"></i>
<i style="left:611px;top:167px;width:12px;height:12px;background:#fbfb00"></i>
<i style="left:598px;top:179px;width:1px;height:12px;background:#ecec15"></i>
<i style="left:599px;top:179px;width:12px;height:12px;background:#c8c800"></i>
<i style="left:611px;top:179px;width:12px;height:12px;background:#dbdb00"></i>
<i style="left:598px;top:191px;width:1px;height:12px;background:#fbfc75"></i>
<i style="left:599px;top:191px;width:12px;height:12px;background:#fdfe6a"></i>
<i style="left:611px;top:191px;width:12px;height:12px;background:#fdfe6a"></i>
<i style="left:623px;top:191px;width:0.5px;height:12px;background:#fdfe6a"></i>
<i style="left:598px;top:203px;width:1px;height:12px;background:#f0f0f1"></i>
<i style="left:599px;top:203px;width:12px;height:12px;background:#e0e0e0"></i>
<i style="left:611px;top:203px;width:12px;height:12px;background:#eeeeee"></i>
<i style="left:598px;top:215px;width:1px;height:12px;background:#f0f1f1"></i>
<i style="left:599px;top:215px;width:12px;height:12px;background:#d9d9d9"></i>
<i style="left:611px;top:215px;width:12px;height:12px;background:#e8e8e8"></i>
<i style="left:598px;top:227px;width:1px;height:12px;background:#fbfcfe"></i>
<i style="left:599px;top:227px;width:12px;height:12px;background:#fdfefe"></i>
<i style="left:611px;top:227px;width:12px;height:12px;background:#fdfefe"></i>
<i style="left:623px;top:227px;width:0.5px;height:12px;background:#fdfefe"></i>
<i style="left:598px;top:239px;width:1px;height:12px;background:#eeeeef"></i>
<i style="left:599px;top:239px;width:12px;height:12px;background:#cbcbcb"></i>
<i style="left:611px;top:239px;width:12px;height:12px;background:#c3c3c3"></i>
<i style="left:623px;top:239px;width:0.5px;height:12px;background:#dbdbdb"></i>
<i style="left:598px;top:251px;width:1px;height:12px;background:#f2f3f3"></i>
<i style="left:599px;top:251px;width:12px;height:12px;background:#e7e7e7"></i>
<i style="left:611px;top:251px;width:12px;height:12px;background:#e2e2e2"></i>
<i style="left:623px;top:251px;width:0.5px;height:12px;background:#f2f2f2"></i>
<i style="left:598px;top:263px;width:1px;height:12px;background:#fbfcfe"></i>
<i style="left:599px;top:263px;width:12px;height:12px;background:#fdfefe"></i>
<i style="left:611px;top:263px;width:12px;height:12px;background:#fdfefe"></i>
<i style="left:623px;top:263px;width:0.5px;height:12px;background:#fdfefe"></i>
<i style="left:598px;top:275px;width:1px;height:12px;background:#e3e4e5"></i>
<i style="left:599px;top:275px;width:12px;height:12px;background:#b5b5b5"></i>
<i style="left:611px;top:275px;width:12px;height:12px;background:#acacac"></i>
<i style="left:623px;top:275px;width:0.5px;height:12px;background:#cfcfcf"></i>
<i style="left:598px;top:287px;width:1px;height:12px;background:#fbfbfd"></i>
<i style="left:599px;top:287px;width:12px;height:12px;background:#fcfcfd"></i>
<i style="left:611px;top:287px;width:12px;height:12px;background:#f7f8f9"></i>
<i style="left:623px;top:287px;width:0.5px;height:12px;background:#fdfefe"></i>
<i style="left:598px;top:299px;width:1px;height:12px;background:#eff0f1"></i>
<i style="left:599px;top:299px;width:12px;height:12px;background:#f0f0f0"></i>
<i style="left:611px;top:299px;width:12px;height:12px;background:#f5f5f5"></i>
<i style="left:623px;top:299px;width:0.5px;height:12px;background:#f1f1f1"></i>
<i style="left:598px;top:311px;width:1px;height:12px;background:#dadbdb"></i>
<i style="left:599px;top:311px;width:12px;height:12px;background:#cccccc"></i>
<i style="left:611px;top:311px;width:12px;height:12px;background:#c5c5c5"></i>
<i style="left:623px;top:311px;width:0.5px;height:12px;background:#b7b7b7"></i>
<i style="left:598px;top:323px;width:1px;height:8px;background:#aee4c8"></i>
<i style="left:599px;top:323px;width:12px;height:8px;background:#a8e3c4"></i>
<i style="left:611px;top:323px;width:12px;height:8px;background:#a8e3c4"></i>
<i style="left:623px;top:323px;width:0.5px;height:8px;background:#a8e3c4"></i>
<i style="left:596px;top:331px;width:3px;height:4px;background:#aee4c8"></i>
<i style="left:599px;top:331px;width:12px;height:4px;background:#a8e3c4"></i>
<i style="left:611px;top:331px;width:10px;height:4px;background:#a8e3c4"></i>
<i style="left:596px;top:335px;width:3px;height:12px;background:#13ab5a"></i>
<i style="left:599px;top:335px;width:12px;height:12px;background:#009645"></i>
<i style="left:611px;top:335px;width:10px;height:12px;background:#009b47"></i>
<i style="left:596px;top:347px;width:3px;height:12px;background:#13ab5a"></i>
<i style="left:599px;top:347px;width:12px;height:12px;background:#009444"></i>
<i style="left:611px;top:347px;width:10px;height:12px;background:#009845"></i>
<i style="left:596px;top:359px;width:3px;height:12px;background:#acd998"></i>
<i style="left:599px;top:359px;width:12px;height:12px;background:#a7d790"></i>
<i style="left:611px;top:359px;width:10px;height:12px;background:#a7d790"></i>
<i style="left:596px;top:371px;width:3px;height:12px;background:#ddce98"></i>
<i style="left:599px;top:371px;width:12px;height:12px;background:#b5a776"></i>
<i style="left:611px;top:371px;width:10px;height:12px;background:#bfb07c"></i>
<i style="left:596px;top:383px;width:3px;height:12px;background:#ecdca2"></i>
<i style="left:599px;top:383px;width:12px;height:12px;background:#decd91"></i>
<i style="left:611px;top:383px;width:10px;height:12px;background:#e5d495"></i>
<i style="left:596px;top:395px;width:3px;height:1px;background:#39be71"></i>
<i style="left:599px;top:395px;width:12px;height:1px;background:#28b965"></i>
<i style="left:611px;top:395px;width:10px;height:1px;background:#28b965"></i>
<i style="left:593.4px;top:396px;width:5.6px;height:11px;background:#39be71"></i>
<i style="left:599px;top:396px;width:12px;height:11px;background:#28b965"></i>
<i style="left:611px;top:396px;width:6.4px;height:11px;background:#28b965"></i>
<i style="left:593.4px;top:407px;width:5.6px;height:12px;background:#13934f"></i>
<i style="left:599px;top:407px;width:12px;height:12px;background:#00823b"></i>
<i style="left:611px;top:407px;width:6.4px;height:12px;background:#00823b"></i>
<i style="left:593.4px;top:419px;width:5.6px;height:12px;background:#25b96b"></i>
<i style="left:599px;top:419px;width:12px;height:12px;background:#13b45e"></i>
<i style="left:611px;top:419px;width:6.4px;height:12px;background:#13b35d"></i>
<i style="left:593.4px;top:431px;width:5.6px;height:12px;background:#13ab5a"></i>
<i style="left:599px;top:431px;width:12px;height:12px;background:#00a44b"></i>
<i style="left:611px;top:431px;width:6.4px;height:12px;background:#00a84d"></i>
<i style="left:593.4px;top:443px;width:5.6px;height:12px;background:#139c53"></i>
<i style="left:599px;top:443px;width:12px;height:12px;background:#008c40"></i>
<i style="left:611px;top:443px;width:6.4px;height:12px;background:#00873e"></i>
<i style="left:593.4px;top:455px;width:5.6px;height:12px;background:#25b96b"></i>
<i style="left:599px;top:455px;width:12px;height:12px;background:#13b45e"></i>
<i style="left:611px;top:455px;width:6.4px;height:12px;background:#13b45e"></i>
<i style="left:593.4px;top:467px;width:5.6px;height:12px;background:#13a456"></i>
<i style="left:599px;top:467px;width:12px;height:12px;background:#009a46"></i>
<i style="left:611px;top:467px;width:6.4px;height:12px;background:#009d48"></i>
<i style="left:593.4px;top:479px;width:5.6px;height:12px;background:#13a356"></i>
<i style="left:599px;top:479px;width:12px;height:12px;background:#009745"></i>
<i style="left:611px;top:479px;width:6.4px;height:12px;background:#009343"></i>
<i style="left:593.4px;top:491px;width:5.6px;height:8.5px;background:#25b96b"></i>
<i style="left:599px;top:491px;width:12px;height:8.5px;background:#13b45e"></i>
<i style="left:611px;top:491px;width:6.4px;height:8.5px;background:#13b45e"></i>
<i style="left:635.6px;top:227px;width:11.4px;height:12px;background:#fdfefe"></i>
<i style="left:647px;top:227px;width:12px;height:12px;background:#fdfefe"></i>
<i style="left:659px;top:227px;width:0.3px;height:12px;background:#fdfefe"></i>
<i style="left:635.6px;top:239px;width:11.4px;height:12px;background:#c1c1c1"></i>
<i style="left:647px;top:239px;width:12px;height:12px;background:#b4b4b4"></i>
<i style="left:659px;top:239px;width:0.3px;height:12px;background:#ebebeb"></i>
<i style="left:635.6px;top:251px;width:11.4px;height:12px;background:#f3f3f3"></i>
<i style="left:647px;top:251px;width:12px;height:12px;background:#e2e2e2"></i>
<i style="left:659px;top:251px;width:0.3px;height:12px;background:#ebebeb"></i>
<i style="left:635.6px;top:263px;width:11.4px;height:12px;background:#fdfefe"></i>
<i style="left:647px;top:263px;width:12px;height:12px;background:#fdfefe"></i>
<i style="left:659px;top:263px;width:0.3px;height:12px;background:#fdfefe"></i>
<i style="left:635.6px;top:275px;width:11.4px;height:12px;background:#bbbbbb"></i>
<i style="left:647px;top:275px;width:12px;height:12px;background:#9f9f9f"></i>
<i style="left:659px;top:275px;width:0.3px;height:12px;background:#d7d7d7"></i>
<i style="left:635.6px;top:287px;width:11.4px;height:12px;background:#f8f9f9"></i>
<i style="left:647px;top:287px;width:12px;height:12px;background:#f5f6f6"></i>
<i style="left:659px;top:287px;width:0.3px;height:12px;background:#fdfefe"></i>
<i style="left:635.6px;top:299px;width:11.4px;height:12px;background:#e6e6e6"></i>
<i style="left:647px;top:299px;width:12px;height:12px;background:#e6e6e6"></i>
<i style="left:659px;top:299px;width:0.3px;height:12px;background:#e9e9e9"></i>
<i style="left:635.6px;top:311px;width:11.4px;height:12px;background:#bbbbbb"></i>
<i style="left:647px;top:311px;width:12px;height:12px;background:#bababa"></i>
<i style="left:659px;top:311px;width:0.3px;height:12px;background:#cbcbcb"></i>
<i style="left:635.6px;top:323px;width:11.4px;height:8px;background:#a8e3c4"></i>
<i style="left:647px;top:323px;width:12px;height:8px;background:#a8e3c4"></i>
<i style="left:659px;top:323px;width:0.3px;height:8px;background:#a8e3c4"></i>
<i style="left:634.4px;top:331px;width:0.6px;height:4px;background:#a8e3c4"></i>
<i style="left:635px;top:331px;width:12px;height:4px;background:#a8e3c4"></i>
<i style="left:647px;top:331px;width:12px;height:4px;background:#a8e3c4"></i>
<i style="left:634.4px;top:335px;width:0.6px;height:12px;background:#00a34a"></i>
<i style="left:635px;top:335px;width:12px;height:12px;background:#009b47"></i>
<i style="left:647px;top:335px;width:12px;height:12px;background:#008c40"></i>
<i style="left:634.4px;top:347px;width:0.6px;height:12px;background:#009a47"></i>
<i style="left:635px;top:347px;width:12px;height:12px;background:#009243"></i>
<i style="left:647px;top:347px;width:12px;height:12px;background:#00893e"></i>
<i style="left:634.4px;top:359px;width:0.6px;height:12px;background:#a7d790"></i>
<i style="left:635px;top:359px;width:12px;height:12px;background:#a7d790"></i>
<i style="left:647px;top:359px;width:12px;height:12px;background:#a7d790"></i>
<i style="left:634.4px;top:371px;width:0.6px;height:12px;background:#b7a977"></i>
<i style="left:635px;top:371px;width:12px;height:12px;background:#c9ba83"></i>
<i style="left:647px;top:371px;width:12px;height:12px;background:#c7b882"></i>
<i style="left:634.4px;top:383px;width:0.6px;height:12px;background:#e2d194"></i>
<i style="left:635px;top:383px;width:12px;height:12px;background:#e8d697"></i>
<i style="left:647px;top:383px;width:12px;height:12px;background:#f2e09e"></i>
<i style="left:634.4px;top:395px;width:0.6px;height:1px;background:#28b965"></i>
<i style="left:635px;top:395px;width:12px;height:1px;background:#28b965"></i>
<i style="left:647px;top:395px;width:12px;height:1px;background:#28b965"></i>
<i style="left:630px;top:396px;width:5px;height:11px;background:#28b965"></i>
<i style="left:635px;top:396px;width:12px;height:11px;background:#28b965"></i>
<i style="left:647px;top:396px;width:10.3px;height:11px;background:#28b965"></i>
<i style="left:630px;top:407px;width:5px;height:12px;background:#007636"></i>
<i style="left:635px;top:407px;width:12px;height:12px;background:#007435"></i>
<i style="left:647px;top:407px;width:10.3px;height:12px;background:#007033"></i>
<i style="left:630px;top:419px;width:5px;height:12px;background:#13b25d"></i>
<i style="left:635px;top:419px;width:12px;height:12px;background:#13b05c"></i>
<i style="left:647px;top:419px;width:10.3px;height:12px;background:#13b25d"></i>
<i style="left:630px;top:431px;width:5px;height:12px;background:#00a54c"></i>
<i style="left:635px;top:431px;width:12px;height:12px;background:#009e48"></i>
<i style="left:647px;top:431px;width:10.3px;height:12px;background:#009e48"></i>
<i style="left:630px;top:443px;width:5px;height:12px;background:#007d39"></i>
<i style="left:635px;top:443px;width:12px;height:12px;background:#00813b"></i>
<i style="left:647px;top:443px;width:10.3px;height:12px;background:#007f3a"></i>
<i style="left:630px;top:455px;width:5px;height:12px;background:#13b45e"></i>
<i style="left:635px;top:455px;width:12px;height:12px;background:#13b45e"></i>
<i style="left:647px;top:455px;width:10.3px;height:12px;background:#13b45e"></i>
<i style="left:630px;top:467px;width:5px;height:12px;background:#009644"></i>
<i style="left:635px;top:467px;width:12px;height:12px;background:#009443"></i>
<i style="left:647px;top:467px;width:10.3px;height:12px;background:#008f41"></i>
<i style="left:630px;top:479px;width:5px;height:12px;background:#008d40"></i>
<i style="left:635px;top:479px;width:12px;height:12px;background:#008b3f"></i>
<i style="left:647px;top:479px;width:10.3px;height:12px;background:#008f41"></i>
<i style="left:630px;top:491px;width:5px;height:8.5px;background:#13b45e"></i>
<i style="left:635px;top:491px;width:12px;height:8.5px;background:#13b45e"></i>
<i style="left:647px;top:491px;width:10.3px;height:8.5px;background:#13b45e"></i>
<i style="left:627px;top:499.5px;width:8px;height:3.5px;background:#13b45e"></i>
<i style="left:635px;top:499.5px;width:12px;height:3.5px;background:#13b45e"></i>
<i style="left:647px;top:499.5px;width:5px;height:3.5px;background:#13b45e"></i>
<i style="left:627px;top:503px;width:8px;height:12px;background:#018847"></i>
<i style="left:635px;top:503px;width:12px;height:12px;background:#009142"></i>
<i style="left:647px;top:503px;width:5px;height:12px;background:#00893e"></i>
<i style="left:627px;top:515px;width:8px;height:12px;background:#019f4f"></i>
<i style="left:635px;top:515px;width:12px;height:12px;background:#00a34a"></i>
<i style="left:647px;top:515px;width:5px;height:12px;background:#00a049"></i>
<i style="left:627px;top:527px;width:8px;height:12px;background:#13b45e"></i>
<i style="left:635px;top:527px;width:12px;height:12px;background:#13b45e"></i>
<i style="left:647px;top:527px;width:5px;height:12px;background:#13b45e"></i>
<i style="left:627px;top:539px;width:8px;height:12px;background:#017b45"></i>
<i style="left:635px;top:539px;width:12px;height:12px;background:#00843c"></i>
<i style="left:647px;top:539px;width:5px;height:12px;background:#008f41"></i>
<i style="left:627px;top:551px;width:8px;height:11px;background:#14a85b"></i>
<i style="left:635px;top:551px;width:12px;height:11px;background:#13b05c"></i>
<i style="left:647px;top:551px;width:5px;height:11px;background:#13af5b"></i>
<i style="left:668.4px;top:232px;width:2.6px;height:7px;background:#fdfefe"></i>
<i style="left:671px;top:232px;width:12px;height:7px;background:#fdfefe"></i>
<i style="left:683px;top:232px;width:12px;height:7px;background:#fdfefe"></i>
<i style="left:695px;top:232px;width:8px;height:7px;background:#fdfefe"></i>
<i style="left:668.4px;top:239px;width:2.6px;height:12px;background:#ebebeb"></i>
<i style="left:671px;top:239px;width:12px;height:12px;background:#cccccc"></i>
<i style="left:683px;top:239px;width:12px;height:12px;background:#cbcbcb"></i>
<i style="left:695px;top:239px;width:8px;height:12px;background:#d2d2d2"></i>
<i style="left:668.4px;top:251px;width:2.6px;height:12px;background:#ebebeb"></i>
<i style="left:671px;top:251px;width:12px;height:12px;background:#e9e9e9"></i>
<i style="left:683px;top:251px;width:12px;height:12px;background:#eaeaea"></i>
<i style="left:695px;top:251px;width:8px;height:12px;background:#e7e7e7"></i>
<i style="left:668.4px;top:263px;width:2.6px;height:12px;background:#fdfefe"></i>
<i style="left:671px;top:263px;width:12px;height:12px;background:#fdfefe"></i>
<i style="left:683px;top:263px;width:12px;height:12px;background:#fdfefe"></i>
<i style="left:695px;top:263px;width:8px;height:12px;background:#fdfefe"></i>
<i style="left:668.4px;top:275px;width:2.6px;height:12px;background:#d7d7d7"></i>
<i style="left:671px;top:275px;width:12px;height:12px;background:#a7a7a7"></i>
<i style="left:683px;top:275px;width:12px;height:12px;background:#c2c2c2"></i>
<i style="left:695px;top:275px;width:8px;height:12px;background:#cfcfcf"></i>
<i style="left:668.4px;top:287px;width:2.6px;height:12px;background:#fdfefe"></i>
<i style="left:671px;top:287px;width:12px;height:12px;background:#fcfcfd"></i>
<i style="left:683px;top:287px;width:12px;height:12px;background:#f4f5f5"></i>
<i style="left:695px;top:287px;width:8px;height:12px;background:#fdfefe"></i>
<i style="left:668.4px;top:299px;width:2.6px;height:12px;background:#e9e9e9"></i>
<i style="left:671px;top:299px;width:12px;height:12px;background:#f3f3f3"></i>
<i style="left:683px;top:299px;width:12px;height:12px;background:#f6f6f6"></i>
<i style="left:695px;top:299px;width:8px;height:12px;background:#ececec"></i>
<i style="left:668.4px;top:311px;width:2.6px;height:12px;background:#cbcbcb"></i>
<i style="left:671px;top:311px;width:12px;height:12px;background:#ababab"></i>
<i style="left:683px;top:311px;width:12px;height:12px;background:#c8c8c8"></i>
<i style="left:695px;top:311px;width:8px;height:12px;background:#bebebe"></i>
<i style="left:668.4px;top:323px;width:2.6px;height:8px;background:#a8e3c4"></i>
<i style="left:671px;top:323px;width:12px;height:8px;background:#a8e3c4"></i>
<i style="left:683px;top:323px;width:12px;height:8px;background:#a8e3c4"></i>
<i style="left:695px;top:323px;width:8px;height:8px;background:#a8e3c4"></i>
<i style="left:703px;top:246px;width:4px;height:5px;background:#d2d2d2"></i>
<i style="left:707px;top:246px;width:3px;height:5px;background:#dedede"></i>
<i style="left:703px;top:251px;width:4px;height:12px;background:#e7e7e7"></i>
<i style="left:707px;top:251px;width:3px;height:12px;background:#ededed"></i>
<i style="left:703px;top:263px;width:4px;height:12px;background:#fdfefe"></i>
<i style="left:707px;top:263px;width:3px;height:12px;background:#fdfefe"></i>
<i style="left:703px;top:275px;width:4px;height:12px;background:#cfcfcf"></i>
<i style="left:707px;top:275px;width:3px;height:12px;background:#c7c7c7"></i>
<i style="left:703px;top:287px;width:4px;height:12px;background:#fdfefe"></i>
<i style="left:707px;top:287px;width:3px;height:12px;background:#fdfefe"></i>
<i style="left:703px;top:299px;width:4px;height:12px;background:#ececec"></i>
<i style="left:707px;top:299px;width:3px;height:12px;background:#f8f8f8"></i>
<i style="left:703px;top:311px;width:4px;height:12px;background:#bebebe"></i>
<i style="left:707px;top:311px;width:3px;height:12px;background:#dddddd"></i>
<i style="left:703px;top:323px;width:4px;height:8px;background:#a8e3c4"></i>
<i style="left:707px;top:323px;width:3px;height:8px;background:#a8e3c4"></i>
<i style="left:710px;top:246px;width:8px;height:5px;background:#dedede"></i>
<i style="left:710px;top:251px;width:8px;height:11px;background:#ededed"></i>
<i style="left:668.7px;top:331px;width:2.3px;height:4px;background:#a8e3c4"></i>
<i style="left:671px;top:331px;width:12px;height:4px;background:#a8e3c4"></i>
<i style="left:683px;top:331px;width:12px;height:4px;background:#a8e3c4"></i>
<i style="left:695px;top:331px;width:12px;height:4px;background:#a8e3c4"></i>
<i style="left:707px;top:331px;width:3.5px;height:4px;background:#a8e3c4"></i>
<i style="left:668.7px;top:335px;width:2.3px;height:12px;background:#00a74c"></i>
<i style="left:671px;top:335px;width:12px;height:12px;background:#009142"></i>
<i style="left:683px;top:335px;width:12px;height:12px;background:#009745"></i>
<i style="left:695px;top:335px;width:12px;height:12px;background:#00a34a"></i>
<i style="left:707px;top:335px;width:3.5px;height:12px;background:#009e48"></i>
<i style="left:668.7px;top:347px;width:2.3px;height:12px;background:#009f49"></i>
<i style="left:671px;top:347px;width:12px;height:12px;background:#009042"></i>
<i style="left:683px;top:347px;width:12px;height:12px;background:#009a46"></i>
<i style="left:695px;top:347px;width:12px;height:12px;background:#009a46"></i>
<i style="left:707px;top:347px;width:3.5px;height:12px;background:#009a46"></i>
<i style="left:668.7px;top:359px;width:2.3px;height:11px;background:#a7d790"></i>
<i style="left:671px;top:359px;width:12px;height:11px;background:#a7d790"></i>
<i style="left:683px;top:359px;width:12px;height:11px;background:#a7d790"></i>
<i style="left:695px;top:359px;width:12px;height:11px;background:#a7d790"></i>
<i style="left:707px;top:359px;width:3.5px;height:11px;background:#a7d790"></i>
<i style="left:668.7px;top:395px;width:2.3px;height:12px;background:#28b965"></i>
<i style="left:671px;top:395px;width:12px;height:12px;background:#28b965"></i>
<i style="left:683px;top:395px;width:12px;height:12px;background:#28b965"></i>
<i style="left:695px;top:395px;width:12px;height:12px;background:#28b965"></i>
<i style="left:707px;top:395px;width:9.3px;height:12px;background:#28b965"></i>
<i style="left:668.7px;top:407px;width:2.3px;height:12px;background:#007d39"></i>
<i style="left:671px;top:407px;width:12px;height:12px;background:#007b38"></i>
<i style="left:683px;top:407px;width:12px;height:12px;background:#00843c"></i>
<i style="left:695px;top:407px;width:12px;height:12px;background:#00813b"></i>
<i style="left:707px;top:407px;width:9.3px;height:12px;background:#009645"></i>
<i style="left:668.7px;top:419px;width:2.3px;height:12px;background:#13b35d"></i>
<i style="left:671px;top:419px;width:12px;height:12px;background:#13a758"></i>
<i style="left:683px;top:419px;width:12px;height:12px;background:#13b35d"></i>
<i style="left:695px;top:419px;width:12px;height:12px;background:#13a859"></i>
<i style="left:707px;top:419px;width:9.3px;height:12px;background:#13b35d"></i>
<i style="left:668.7px;top:431px;width:2.3px;height:12px;background:#00a049"></i>
<i style="left:671px;top:431px;width:12px;height:12px;background:#00a74c"></i>
<i style="left:683px;top:431px;width:12px;height:12px;background:#00a94d"></i>
<i style="left:695px;top:431px;width:12px;height:12px;background:#00a24a"></i>
<i style="left:707px;top:431px;width:9.3px;height:12px;background:#00ae4f"></i>
<i style="left:668.7px;top:443px;width:2.3px;height:12px;background:#008b40"></i>
<i style="left:671px;top:443px;width:12px;height:12px;background:#007536"></i>
<i style="left:683px;top:443px;width:12px;height:12px;background:#00893f"></i>
<i style="left:695px;top:443px;width:12px;height:12px;background:#00823b"></i>
<i style="left:707px;top:443px;width:9.3px;height:12px;background:#00ad4f"></i>
<i style="left:668.7px;top:455px;width:2.3px;height:12px;background:#13b45e"></i>
<i style="left:671px;top:455px;width:12px;height:12px;background:#13b45e"></i>
<i style="left:683px;top:455px;width:12px;height:12px;background:#13b45e"></i>
<i style="left:695px;top:455px;width:12px;height:12px;background:#13b45e"></i>
<i style="left:707px;top:455px;width:9.3px;height:12px;background:#13b45e"></i>
<i style="left:668.7px;top:467px;width:2.3px;height:12px;background:#009243"></i>
<i style="left:671px;top:467px;width:12px;height:12px;background:#009444"></i>
<i style="left:683px;top:467px;width:12px;height:12px;background:#009845"></i>
<i style="left:695px;top:467px;width:12px;height:12px;background:#009745"></i>
<i style="left:707px;top:467px;width:9.3px;height:12px;background:#00ae4f"></i>
<i style="left:668.7px;top:479px;width:2.3px;height:12px;background:#009a46"></i>
<i style="left:671px;top:479px;width:12px;height:12px;background:#00883e"></i>
<i style="left:683px;top:479px;width:12px;height:12px;background:#009a46"></i>
<i style="left:695px;top:479px;width:12px;height:12px;background:#008d41"></i>
<i style="left:707px;top:479px;width:9.3px;height:12px;background:#00ad4f"></i>
<i style="left:668.7px;top:491px;width:2.3px;height:10px;background:#13b45e"></i>
<i style="left:671px;top:491px;width:12px;height:10px;background:#13b45e"></i>
<i style="left:683px;top:491px;width:12px;height:10px;background:#13b45e"></i>
<i style="left:695px;top:491px;width:12px;height:10px;background:#13b45e"></i>
<i style="left:707px;top:491px;width:9.3px;height:10px;background:#13b45e"></i>
<i style="left:663px;top:497.6px;width:8px;height:5.4px;background:#13b45e"></i>
<i style="left:671px;top:497.6px;width:12px;height:5.4px;background:#13b45e"></i>
<i style="left:683px;top:497.6px;width:12px;height:5.4px;background:#13b45e"></i>
<i style="left:695px;top:497.6px;width:12px;height:5.4px;background:#13b45e"></i>
<i style="left:707px;top:497.6px;width:12px;height:5.4px;background:#13b45e"></i>
<i style="left:719px;top:497.6px;width:12px;height:5.4px;background:#13b45e"></i>
<i style="left:731px;top:497.6px;width:0.5px;height:5.4px;background:#13b45e"></i>
<i style="left:663px;top:503px;width:8px;height:12px;background:#008b3f"></i>
<i style="left:671px;top:503px;width:12px;height:12px;background:#007e39"></i>
<i style="left:683px;top:503px;width:12px;height:12px;background:#00873e"></i>
<i style="left:695px;top:503px;width:12px;height:12px;background:#00893f"></i>
<i style="left:707px;top:503px;width:12px;height:12px;background:#00863d"></i>
<i style="left:719px;top:503px;width:12px;height:12px;background:#008e41"></i>
<i style="left:731px;top:503px;width:0.5px;height:12px;background:#008b3f"></i>
<i style="left:663px;top:515px;width:8px;height:12px;background:#009c47"></i>
<i style="left:671px;top:515px;width:12px;height:12px;background:#009a46"></i>
<i style="left:683px;top:515px;width:12px;height:12px;background:#009e48"></i>
<i style="left:695px;top:515px;width:12px;height:12px;background:#00a14a"></i>
<i style="left:707px;top:515px;width:12px;height:12px;background:#009d48"></i>
<i style="left:719px;top:515px;width:12px;height:12px;background:#00aa4e"></i>
<i style="left:731px;top:515px;width:0.5px;height:12px;background:#009a46"></i>
<i style="left:663px;top:527px;width:8px;height:1px;background:#13b45e"></i>
<i style="left:671px;top:527px;width:12px;height:1px;background:#13b45e"></i>
<i style="left:683px;top:527px;width:12px;height:1px;background:#13b45e"></i>
<i style="left:695px;top:527px;width:12px;height:1px;background:#13b45e"></i>
<i style="left:707px;top:527px;width:12px;height:1px;background:#13b45e"></i>
<i style="left:719px;top:527px;width:12px;height:1px;background:#13b45e"></i>
<i style="left:731px;top:527px;width:0.5px;height:1px;background:#13b45e"></i>
<i style="left:632.6px;top:566px;width:2.4px;height:9px;background:#00a54c"></i>
<i style="left:635px;top:566px;width:12px;height:9px;background:#009e48"></i>
<i style="left:647px;top:566px;width:12px;height:9px;background:#009e48"></i>
<i style="left:659px;top:566px;width:12px;height:9px;background:#00a049"></i>
<i style="left:671px;top:566px;width:12px;height:9px;background:#00a74c"></i>
<i style="left:683px;top:566px;width:12px;height:9px;background:#00a94d"></i>
<i style="left:695px;top:566px;width:4.2px;height:9px;background:#00a64c"></i>
<i style="left:632.6px;top:575px;width:2.4px;height:12px;background:#007d39"></i>
<i style="left:635px;top:575px;width:12px;height:12px;background:#00813b"></i>
<i style="left:647px;top:575px;width:12px;height:12px;background:#007f3a"></i>
<i style="left:659px;top:575px;width:12px;height:12px;background:#008b40"></i>
<i style="left:671px;top:575px;width:12px;height:12px;background:#007536"></i>
<i style="left:683px;top:575px;width:12px;height:12px;background:#00893f"></i>
<i style="left:695px;top:575px;width:4.2px;height:12px;background:#008e41"></i>
<i style="left:632.6px;top:587px;width:2.4px;height:3px;background:#13b45e"></i>
<i style="left:635px;top:587px;width:12px;height:3px;background:#13b45e"></i>
<i style="left:647px;top:587px;width:12px;height:3px;background:#13b45e"></i>
<i style="left:659px;top:587px;width:12px;height:3px;background:#13b45e"></i>
<i style="left:671px;top:587px;width:12px;height:3px;background:#13b45e"></i>
<i style="left:683px;top:587px;width:12px;height:3px;background:#13b45e"></i>
<i style="left:695px;top:587px;width:4.2px;height:3px;background:#13b45e"></i>
<i style="left:640px;top:597px;width:7px;height:2px;background:#13b45e"></i>
<i style="left:647px;top:597px;width:12px;height:2px;background:#13b45e"></i>
<i style="left:659px;top:597px;width:12px;height:2px;background:#13b45e"></i>
<i style="left:671px;top:597px;width:12px;height:2px;background:#13b45e"></i>
<i style="left:683px;top:597px;width:12px;height:2px;background:#13b45e"></i>
<i style="left:695px;top:597px;width:12px;height:2px;background:#13b45e"></i>
<i style="left:707px;top:597px;width:12px;height:2px;background:#13b45e"></i>
<i style="left:719px;top:597px;width:3px;height:2px;background:#13b45e"></i>
<i style="left:640px;top:599px;width:7px;height:12px;background:#009c47"></i>
<i style="left:647px;top:599px;width:12px;height:12px;background:#009946"></i>
<i style="left:659px;top:599px;width:12px;height:12px;background:#009946"></i>
<i style="left:671px;top:599px;width:12px;height:12px;background:#008e41"></i>
<i style="left:683px;top:599px;width:12px;height:12px;background:#009443"></i>
<i style="left:695px;top:599px;width:12px;height:12px;background:#009444"></i>
<i style="left:707px;top:599px;width:12px;height:12px;background:#009946"></i>
<i style="left:719px;top:599px;width:3px;height:12px;background:#009b47"></i>
<i style="left:640px;top:611px;width:7px;height:9px;background:#009745"></i>
<i style="left:647px;top:611px;width:12px;height:9px;background:#008f41"></i>
<i style="left:659px;top:611px;width:12px;height:9px;background:#008e41"></i>
<i style="left:671px;top:611px;width:12px;height:9px;background:#008b3f"></i>
<i style="left:683px;top:611px;width:12px;height:9px;background:#009242"></i>
<i style="left:695px;top:611px;width:12px;height:9px;background:#009745"></i>
<i style="left:707px;top:611px;width:12px;height:9px;background:#009042"></i>
<i style="left:719px;top:611px;width:3px;height:9px;background:#009e48"></i>
<i style="left:915px;top:159px;width:8px;height:7px;background:#dcdcc6"></i>
<i style="left:923px;top:159px;width:12px;height:7px;background:#e7e7d2"></i>
<i style="left:935px;top:159px;width:12px;height:7px;background:#e4e4cf"></i>
<i style="left:947px;top:159px;width:1px;height:7px;background:#e9e9d4"></i>
<i style="left:909.7px;top:166px;width:1.3px;height:1px;background:#f1f1dc"></i>
<i style="left:911px;top:166px;width:12px;height:1px;background:#dcdcc6"></i>
<i style="left:923px;top:166px;width:12px;height:1px;background:#e7e7d2"></i>
<i style="left:935px;top:166px;width:12px;height:1px;background:#e4e4cf"></i>
<i style="left:947px;top:166px;width:12px;height:1px;background:#e9e9d4"></i>
<i style="left:959px;top:166px;width:1px;height:1px;background:#ededd7"></i>
<i style="left:909.7px;top:167px;width:1.3px;height:12px;background:#fdfd00"></i>
<i style="left:911px;top:167px;width:12px;height:12px;background:#f6f600"></i>
<i style="left:923px;top:167px;width:12px;height:12px;background:#fcfc00"></i>
<i style="left:935px;top:167px;width:12px;height:12px;background:#f8f800"></i>
<i style="left:947px;top:167px;width:12px;height:12px;background:#f1f100"></i>
<i style="left:909.7px;top:179px;width:1.3px;height:12px;background:#f3f300"></i>
<i style="left:911px;top:179px;width:12px;height:12px;background:#aeae00"></i>
<i style="left:923px;top:179px;width:12px;height:12px;background:#c2c200"></i>
<i style="left:935px;top:179px;width:12px;height:12px;background:#cdcd00"></i>
<i style="left:947px;top:179px;width:12px;height:12px;background:#d5d500"></i>
<i style="left:909.7px;top:191px;width:1.3px;height:12px;background:#fdfe6a"></i>
<i style="left:911px;top:191px;width:12px;height:12px;background:#fdfe6a"></i>
<i style="left:923px;top:191px;width:12px;height:12px;background:#fdfe6a"></i>
<i style="left:935px;top:191px;width:12px;height:12px;background:#fdfe6a"></i>
<i style="left:947px;top:191px;width:12px;height:12px;background:#fdfe6a"></i>
<i style="left:959px;top:191px;width:1px;height:12px;background:#fdfe6a"></i>
<i style="left:909.7px;top:203px;width:1.3px;height:12px;background:#f9f9f9"></i>
<i style="left:911px;top:203px;width:12px;height:12px;background:#e0e0e0"></i>
<i style="left:923px;top:203px;width:12px;height:12px;background:#e6e6e6"></i>
<i style="left:935px;top:203px;width:12px;height:12px;background:#ebebeb"></i>
<i style="left:947px;top:203px;width:12px;height:12px;background:#e6e6e6"></i>
<i style="left:909.7px;top:215px;width:1.3px;height:12px;background:#f7f7f7"></i>
<i style="left:911px;top:215px;width:12px;height:12px;background:#c5c5c5"></i>
<i style="left:923px;top:215px;width:12px;height:12px;background:#d8d8d8"></i>
<i style="left:935px;top:215px;width:12px;height:12px;background:#dbdbdb"></i>
<i style="left:947px;top:215px;width:12px;height:12px;background:#e1e1e1"></i>
<i style="left:909.7px;top:227px;width:1.3px;height:4px;background:#fdfefe"></i>
<i style="left:911px;top:227px;width:12px;height:4px;background:#fdfefe"></i>
<i style="left:923px;top:227px;width:12px;height:4px;background:#fdfefe"></i>
<i style="left:935px;top:227px;width:12px;height:4px;background:#fdfefe"></i>
<i style="left:947px;top:227px;width:12px;height:4px;background:#fdfefe"></i>
<i style="left:959px;top:227px;width:1px;height:4px;background:#fdfefe"></i>
<i style="left:912.4px;top:231px;width:10.6px;height:8px;background:#fdfefe"></i>
<i style="left:923px;top:231px;width:12px;height:8px;background:#fdfefe"></i>
<i style="left:935px;top:231px;width:12px;height:8px;background:#fdfefe"></i>
<i style="left:947px;top:231px;width:3px;height:8px;background:#fdfefe"></i>
<i style="left:912.4px;top:239px;width:10.6px;height:12px;background:#c4c4c4"></i>
<i style="left:923px;top:239px;width:12px;height:12px;background:#d1d1d1"></i>
<i style="left:935px;top:239px;width:12px;height:12px;background:#dddddd"></i>
<i style="left:947px;top:239px;width:3px;height:12px;background:#d8d8d8"></i>
<i style="left:912.4px;top:251px;width:10.6px;height:12px;background:#e1e1e1"></i>
<i style="left:923px;top:251px;width:12px;height:12px;background:#ececec"></i>
<i style="left:935px;top:251px;width:12px;height:12px;background:#e8e8e8"></i>
<i style="left:947px;top:251px;width:3px;height:12px;background:#eeeeee"></i>
<i style="left:912.4px;top:263px;width:10.6px;height:1px;background:#fdfefe"></i>
<i style="left:923px;top:263px;width:12px;height:1px;background:#fdfefe"></i>
<i style="left:935px;top:263px;width:12px;height:1px;background:#fdfefe"></i>
<i style="left:947px;top:263px;width:3px;height:1px;background:#fdfefe"></i>
<i style="left:912.4px;top:264px;width:10.6px;height:11px;background:#fdfefe"></i>
<i style="left:923px;top:264px;width:12px;height:11px;background:#fdfefe"></i>
<i style="left:935px;top:264px;width:8px;height:11px;background:#fdfefe"></i>
<i style="left:912.4px;top:275px;width:10.6px;height:12px;background:#acacac"></i>
<i style="left:923px;top:275px;width:12px;height:12px;background:#c0c0c0"></i>
<i style="left:935px;top:275px;width:8px;height:12px;background:#c8c8c8"></i>
<i style="left:912.4px;top:287px;width:10.6px;height:10px;background:#f7f7f8"></i>
<i style="left:923px;top:287px;width:12px;height:10px;background:#fcfcfd"></i>
<i style="left:935px;top:287px;width:8px;height:10px;background:#fcfdfd"></i>
<i style="left:912.4px;top:297px;width:10.6px;height:2px;background:#f7f7f8"></i>
<i style="left:923px;top:297px;width:12px;height:2px;background:#fcfcfd"></i>
<i style="left:935px;top:297px;width:3px;height:2px;background:#fcfdfd"></i>
<i style="left:912.4px;top:299px;width:10.6px;height:12px;background:#f6f6f6"></i>
<i style="left:923px;top:299px;width:12px;height:12px;background:#fcfcfc"></i>
<i style="left:935px;top:299px;width:3px;height:12px;background:#f8f8f8"></i>
<i style="left:912.4px;top:311px;width:10.6px;height:12px;background:#aeaeae"></i>
<i style="left:923px;top:311px;width:12px;height:12px;background:#c2c2c2"></i>
<i style="left:935px;top:311px;width:3px;height:12px;background:#cdcdcd"></i>
<i style="left:912.4px;top:323px;width:10.6px;height:8px;background:#a8e3c4"></i>
<i style="left:923px;top:323px;width:12px;height:8px;background:#a8e3c4"></i>
<i style="left:935px;top:323px;width:3px;height:8px;background:#a8e3c4"></i>
<i style="left:911.7px;top:331px;width:11.3px;height:4px;background:#a8e3c4"></i>
<i style="left:923px;top:331px;width:12px;height:4px;background:#a8e3c4"></i>
<i style="left:935px;top:331px;width:6px;height:4px;background:#a8e3c4"></i>
<i style="left:911.7px;top:335px;width:11.3px;height:12px;background:#009a46"></i>
<i style="left:923px;top:335px;width:12px;height:12px;background:#009e48"></i>
<i style="left:935px;top:335px;width:6px;height:12px;background:#00a14a"></i>
<i style="left:911.7px;top:347px;width:11.3px;height:12px;background:#00873e"></i>
<i style="left:923px;top:347px;width:12px;height:12px;background:#009444"></i>
<i style="left:935px;top:347px;width:6px;height:12px;background:#009644"></i>
<i style="left:907.7px;top:359px;width:3.3px;height:12px;background:#a7d790"></i>
<i style="left:911px;top:359px;width:12px;height:12px;background:#a7d790"></i>
<i style="left:923px;top:359px;width:12px;height:12px;background:#a7d790"></i>
<i style="left:935px;top:359px;width:8.4px;height:12px;background:#a7d790"></i>
<i style="left:923px;top:371px;width:12px;height:12px;background:#dfce91"></i>
<i style="left:935px;top:371px;width:11.6px;height:12px;background:#e6d596"></i>
<i style="left:923px;top:383px;width:12px;height:12px;background:#f8e6a2"></i>
<i style="left:935px;top:383px;width:11.6px;height:12px;background:#f1df9d"></i>
<i style="left:923px;top:395px;width:12px;height:1px;background:#28b965"></i>
<i style="left:935px;top:395px;width:11.6px;height:1px;background:#28b965"></i>
<i style="left:909.3px;top:396px;width:1.7px;height:11px;background:#28b965"></i>
<i style="left:911px;top:396px;width:12px;height:11px;background:#28b965"></i>
<i style="left:923px;top:396px;width:12px;height:11px;background:#28b965"></i>
<i style="left:935px;top:396px;width:12px;height:11px;background:#28b965"></i>
<i style="left:947px;top:396px;width:2px;height:11px;background:#28b965"></i>
<i style="left:909.3px;top:407px;width:1.7px;height:12px;background:#00a64c"></i>
<i style="left:911px;top:407px;width:12px;height:12px;background:#007636"></i>
<i style="left:923px;top:407px;width:12px;height:12px;background:#00843c"></i>
<i style="left:935px;top:407px;width:12px;height:12px;background:#00893e"></i>
<i style="left:947px;top:407px;width:2px;height:12px;background:#008c40"></i>
<i style="left:909.3px;top:419px;width:1.7px;height:11px;background:#13b45e"></i>
<i style="left:911px;top:419px;width:12px;height:11px;background:#13b05c"></i>
<i style="left:923px;top:419px;width:12px;height:11px;background:#13b35d"></i>
<i style="left:935px;top:419px;width:12px;height:11px;background:#13b45e"></i>
<i style="left:947px;top:419px;width:2px;height:11px;background:#13b15c"></i>
<i style="left:923px;top:430px;width:12px;height:1px;background:#13b35d"></i>
<i style="left:935px;top:430px;width:12px;height:1px;background:#13b45e"></i>
<i style="left:923px;top:431px;width:12px;height:12px;background:#00ac4e"></i>
<i style="left:935px;top:431px;width:12px;height:12px;background:#00ad4f"></i>
<i style="left:923px;top:443px;width:12px;height:9px;background:#009a46"></i>
<i style="left:935px;top:443px;width:12px;height:9px;background:#009946"></i>
<i style="left:923px;top:452px;width:12px;height:3px;background:#009a46"></i>
<i style="left:935px;top:452px;width:12px;height:3px;background:#009946"></i>
<i style="left:947px;top:452px;width:2px;height:3px;background:#00af50"></i>
<i style="left:914.9px;top:455px;width:8.1px;height:8px;background:#13b45e"></i>
<i style="left:923px;top:455px;width:12px;height:8px;background:#13b45e"></i>
<i style="left:935px;top:455px;width:12px;height:8px;background:#13b45e"></i>
<i style="left:947px;top:455px;width:2px;height:8px;background:#13b45e"></i>
<i style="left:914.9px;top:463px;width:8.1px;height:4px;background:#13b45e"></i>
<i style="left:923px;top:463px;width:12px;height:4px;background:#13b45e"></i>
<i style="left:935px;top:463px;width:12px;height:4px;background:#13b45e"></i>
<i style="left:947px;top:463px;width:0.4px;height:4px;background:#13b45e"></i>
<i style="left:914.9px;top:467px;width:8.1px;height:12px;background:#009a46"></i>
<i style="left:923px;top:467px;width:12px;height:12px;background:#009e48"></i>
<i style="left:935px;top:467px;width:12px;height:12px;background:#00a14a"></i>
<i style="left:947px;top:467px;width:0.4px;height:12px;background:#009e48"></i>
<i style="left:914.9px;top:479px;width:8.1px;height:12px;background:#00873e"></i>
<i style="left:923px;top:479px;width:12px;height:12px;background:#009444"></i>
<i style="left:935px;top:479px;width:12px;height:12px;background:#009644"></i>
<i style="left:947px;top:479px;width:0.4px;height:12px;background:#009a46"></i>
<i style="left:914.9px;top:491px;width:8.1px;height:5px;background:#13b45e"></i>
<i style="left:923px;top:491px;width:12px;height:5px;background:#13b45e"></i>
<i style="left:935px;top:491px;width:12px;height:5px;background:#13b45e"></i>
<i style="left:947px;top:491px;width:0.4px;height:5px;background:#13b45e"></i>
<i style="left:914.9px;top:496px;width:8.1px;height:7px;background:#13b45e"></i>
<i style="left:923px;top:496px;width:12px;height:7px;background:#13b45e"></i>
<i style="left:935px;top:496px;width:8.4px;height:7px;background:#13b45e"></i>
<i style="left:914.9px;top:503px;width:8.1px;height:12px;background:#00863d"></i>
<i style="left:923px;top:503px;width:12px;height:12px;background:#009042"></i>
<i style="left:935px;top:503px;width:8.4px;height:12px;background:#009845"></i>
<i style="left:914.9px;top:515px;width:8.1px;height:12px;background:#009a46"></i>
<i style="left:923px;top:515px;width:12px;height:12px;background:#00a24a"></i>
<i style="left:935px;top:515px;width:8.4px;height:12px;background:#009f49"></i>
<i style="left:914.9px;top:527px;width:8.1px;height:12px;background:#13b45e"></i>
<i style="left:923px;top:527px;width:12px;height:12px;background:#13b45e"></i>
<i style="left:935px;top:527px;width:8.4px;height:12px;background:#13b45e"></i>
<i style="left:914.9px;top:539px;width:8.1px;height:12px;background:#007636"></i>
<i style="left:923px;top:539px;width:12px;height:12px;background:#00843c"></i>
<i style="left:935px;top:539px;width:8.4px;height:12px;background:#00893e"></i>
<i style="left:914.9px;top:551px;width:8.1px;height:12px;background:#13b05c"></i>
<i style="left:923px;top:551px;width:12px;height:12px;background:#13b35d"></i>
<i style="left:935px;top:551px;width:8.4px;height:12px;background:#13b45e"></i>
<i style="left:914.9px;top:563px;width:8.1px;height:12px;background:#00a94d"></i>
<i style="left:923px;top:563px;width:12px;height:12px;background:#00ad4f"></i>
<i style="left:935px;top:563px;width:8.4px;height:12px;background:#00ab4e"></i>
<i style="left:914.9px;top:575px;width:8.1px;height:12px;background:#007736"></i>
<i style="left:923px;top:575px;width:12px;height:12px;background:#00853d"></i>
<i style="left:935px;top:575px;width:8.4px;height:12px;background:#008d40"></i>
<i style="left:914.9px;top:587px;width:8.1px;height:8px;background:#13b45e"></i>
<i style="left:923px;top:587px;width:12px;height:8px;background:#13b45e"></i>
<i style="left:935px;top:587px;width:8.4px;height:8px;background:#13b45e"></i>
<i style="left:913px;top:595px;width:10px;height:4px;background:#13b45e"></i>
<i style="left:923px;top:595px;width:12px;height:4px;background:#13b45e"></i>
<i style="left:935px;top:595px;width:12px;height:4px;background:#13b45e"></i>
<i style="left:947px;top:595px;width:1px;height:4px;background:#13b45e"></i>
<i style="left:913px;top:599px;width:10px;height:12px;background:#009a46"></i>
<i style="left:923px;top:599px;width:12px;height:12px;background:#009e48"></i>
<i style="left:935px;top:599px;width:12px;height:12px;background:#00a14a"></i>
<i style="left:947px;top:599px;width:1px;height:12px;background:#009e48"></i>
<i style="left:913px;top:611px;width:10px;height:7px;background:#00873e"></i>
<i style="left:923px;top:611px;width:12px;height:7px;background:#009444"></i>
<i style="left:935px;top:611px;width:12px;height:7px;background:#009644"></i>
<i style="left:947px;top:611px;width:1px;height:7px;background:#009a46"></i>
<i style="left:918px;top:618px;width:5px;height:5px;background:#00873e"></i>
<i style="left:923px;top:618px;width:12px;height:5px;background:#009444"></i>
<i style="left:935px;top:618px;width:9px;height:5px;background:#009644"></i>
<i style="left:927px;top:623px;width:8px;height:2px;background:#a8e3c4"></i>
<i style="left:935px;top:623px;width:3px;height:2px;background:#a8e3c4"></i>
<i style="left:1007px;top:173px;width:12px;height:6px;background:#fbfb00"></i>
<i style="left:1019px;top:173px;width:12px;height:6px;background:#f1f100"></i>
<i style="left:1031px;top:173px;width:12px;height:6px;background:#f5f500"></i>
<i style="left:1007px;top:179px;width:12px;height:12px;background:#e1e100"></i>
<i style="left:1019px;top:179px;width:12px;height:12px;background:#b9b900"></i>
<i style="left:1031px;top:179px;width:12px;height:12px;background:#d3d300"></i>
<i style="left:1006px;top:191px;width:1px;height:12px;background:#fdfe6a"></i>
<i style="left:1007px;top:191px;width:12px;height:12px;background:#fdfe6a"></i>
<i style="left:1019px;top:191px;width:12px;height:12px;background:#fdfe6a"></i>
<i style="left:1031px;top:191px;width:12px;height:12px;background:#fdfe6a"></i>
<i style="left:1007px;top:203px;width:12px;height:12px;background:#f0f0f0"></i>
<i style="left:1019px;top:203px;width:12px;height:12px;background:#d9d9d9"></i>
<i style="left:1031px;top:203px;width:12px;height:12px;background:#e3e3e3"></i>
<i style="left:1007px;top:215px;width:12px;height:12px;background:#ececec"></i>
<i style="left:1019px;top:215px;width:12px;height:12px;background:#d0d0d0"></i>
<i style="left:1031px;top:215px;width:12px;height:12px;background:#e4e4e4"></i>
<i style="left:1006px;top:227px;width:1px;height:12px;background:#fdfefe"></i>
<i style="left:1007px;top:227px;width:12px;height:12px;background:#fdfefe"></i>
<i style="left:1019px;top:227px;width:12px;height:12px;background:#fdfefe"></i>
<i style="left:1031px;top:227px;width:12px;height:12px;background:#fdfefe"></i>
<i style="left:1007px;top:239px;width:12px;height:12px;background:#e6e6e6"></i>
<i style="left:1019px;top:239px;width:12px;height:12px;background:#c5c5c5"></i>
<i style="left:1031px;top:239px;width:12px;height:12px;background:#d8d8d8"></i>
<i style="left:1007px;top:251px;width:12px;height:12px;background:#f6f6f6"></i>
<i style="left:1019px;top:251px;width:12px;height:12px;background:#e4e4e4"></i>
<i style="left:1031px;top:251px;width:12px;height:12px;background:#f0f0f0"></i>
<i style="left:1006px;top:263px;width:1px;height:12px;background:#fdfefe"></i>
<i style="left:1007px;top:263px;width:12px;height:12px;background:#fdfefe"></i>
<i style="left:1019px;top:263px;width:12px;height:12px;background:#fdfefe"></i>
<i style="left:1031px;top:263px;width:12px;height:12px;background:#fdfefe"></i>
<i style="left:1007px;top:275px;width:12px;height:12px;background:#dfdfdf"></i>
<i style="left:1019px;top:275px;width:12px;height:12px;background:#b1b1b1"></i>
<i style="left:1031px;top:275px;width:12px;height:12px;background:#cccccc"></i>
<i style="left:1006px;top:287px;width:1px;height:12px;background:#fdfefe"></i>
<i style="left:1007px;top:287px;width:12px;height:12px;background:#fbfcfc"></i>
<i style="left:1019px;top:287px;width:12px;height:12px;background:#f6f7f7"></i>
<i style="left:1031px;top:287px;width:12px;height:12px;background:#fafafb"></i>
<i style="left:1007px;top:299px;width:12px;height:12px;background:#fbfbfb"></i>
<i style="left:1019px;top:299px;width:12px;height:12px;background:#f1f1f1"></i>
<i style="left:1031px;top:299px;width:12px;height:12px;background:#f5f5f5"></i>
<i style="left:1007px;top:311px;width:12px;height:12px;background:#e1e1e1"></i>
<i style="left:1019px;top:311px;width:12px;height:12px;background:#b9b9b9"></i>
<i style="left:1031px;top:311px;width:12px;height:12px;background:#d3d3d3"></i>
<i style="left:1006px;top:323px;width:1px;height:12px;background:#a8e3c4"></i>
<i style="left:1007px;top:323px;width:12px;height:12px;background:#a8e3c4"></i>
<i style="left:1019px;top:323px;width:12px;height:12px;background:#a8e3c4"></i>
<i style="left:1031px;top:323px;width:12px;height:12px;background:#a8e3c4"></i>
<i style="left:1007px;top:335px;width:12px;height:12px;background:#00a54b"></i>
<i style="left:1019px;top:335px;width:12px;height:12px;background:#009544"></i>
<i style="left:1031px;top:335px;width:12px;height:12px;background:#009c47"></i>
<i style="left:1007px;top:347px;width:12px;height:12px;background:#00a24a"></i>
<i style="left:1019px;top:347px;width:12px;height:12px;background:#008f41"></i>
<i style="left:1031px;top:347px;width:12px;height:12px;background:#009d48"></i>
<i style="left:1006px;top:359px;width:1px;height:12px;background:#a7d790"></i>
<i style="left:1007px;top:359px;width:12px;height:12px;background:#a7d790"></i>
<i style="left:1019px;top:359px;width:12px;height:12px;background:#a7d790"></i>
<i style="left:1031px;top:359px;width:12px;height:12px;background:#a7d790"></i>
<i style="left:1007px;top:371px;width:12px;height:12px;background:#e4d395"></i>
<i style="left:1019px;top:371px;width:12px;height:12px;background:#c4b580"></i>
<i style="left:1031px;top:371px;width:12px;height:12px;background:#d6c68c"></i>
<i style="left:1007px;top:383px;width:12px;height:12px;background:#f4e29f"></i>
<i style="left:1019px;top:383px;width:12px;height:12px;background:#e2d194"></i>
<i style="left:1031px;top:383px;width:12px;height:12px;background:#eedc9b"></i>
<i style="left:1006px;top:395px;width:1px;height:12px;background:#28b965"></i>
<i style="left:1007px;top:395px;width:12px;height:12px;background:#28b965"></i>
<i style="left:1019px;top:395px;width:12px;height:12px;background:#28b965"></i>
<i style="left:1031px;top:395px;width:12px;height:12px;background:#28b965"></i>
<i style="left:1007px;top:407px;width:12px;height:12px;background:#009946"></i>
<i style="left:1019px;top:407px;width:12px;height:12px;background:#007a37"></i>
<i style="left:1031px;top:407px;width:12px;height:12px;background:#008c40"></i>
<i style="left:1006px;top:419px;width:1px;height:12px;background:#13b45e"></i>
<i style="left:1007px;top:419px;width:12px;height:12px;background:#13b35d"></i>
<i style="left:1019px;top:419px;width:12px;height:12px;background:#13af5c"></i>
<i style="left:1031px;top:419px;width:12px;height:12px;background:#13b25d"></i>
<i style="left:1007px;top:431px;width:12px;height:12px;background:#00ac4f"></i>
<i style="left:1019px;top:431px;width:12px;height:12px;background:#00a54b"></i>
<i style="left:1031px;top:431px;width:12px;height:12px;background:#00a84d"></i>
<i style="left:1007px;top:443px;width:12px;height:12px;background:#009a47"></i>
<i style="left:1019px;top:443px;width:12px;height:12px;background:#007f3a"></i>
<i style="left:1031px;top:443px;width:12px;height:12px;background:#009142"></i>
<i style="left:1006px;top:455px;width:1px;height:12px;background:#13b45e"></i>
<i style="left:1007px;top:455px;width:12px;height:12px;background:#13b45e"></i>
<i style="left:1019px;top:455px;width:12px;height:12px;background:#13b45e"></i>
<i style="left:1031px;top:455px;width:12px;height:12px;background:#13b45e"></i>
<i style="left:1007px;top:467px;width:12px;height:12px;background:#00a54b"></i>
<i style="left:1019px;top:467px;width:12px;height:12px;background:#009544"></i>
<i style="left:1031px;top:467px;width:12px;height:12px;background:#009c47"></i>
<i style="left:1007px;top:479px;width:12px;height:12px;background:#00a24a"></i>
<i style="left:1019px;top:479px;width:12px;height:12px;background:#008f41"></i>
<i style="left:1031px;top:479px;width:12px;height:12px;background:#009d48"></i>
<i style="left:1006px;top:491px;width:1px;height:12px;background:#13b45e"></i>
<i style="left:1007px;top:491px;width:12px;height:12px;background:#13b45e"></i>
<i style="left:1019px;top:491px;width:12px;height:12px;background:#13b45e"></i>
<i style="left:1031px;top:491px;width:12px;height:12px;background:#13b45e"></i>
<i style="left:1007px;top:503px;width:12px;height:12px;background:#009e48"></i>
<i style="left:1019px;top:503px;width:12px;height:12px;background:#00873e"></i>
<i style="left:1031px;top:503px;width:12px;height:12px;background:#009444"></i>
<i style="left:1007px;top:515px;width:12px;height:12px;background:#00a94d"></i>
<i style="left:1019px;top:515px;width:12px;height:12px;background:#009c47"></i>
<i style="left:1031px;top:515px;width:12px;height:12px;background:#00a54b"></i>
<i style="left:1006px;top:527px;width:1px;height:12px;background:#13b45e"></i>
<i style="left:1007px;top:527px;width:12px;height:12px;background:#13b45e"></i>
<i style="left:1019px;top:527px;width:12px;height:12px;background:#13b45e"></i>
<i style="left:1031px;top:527px;width:12px;height:12px;background:#13b45e"></i>
<i style="left:1007px;top:539px;width:12px;height:12px;background:#009946"></i>
<i style="left:1019px;top:539px;width:12px;height:12px;background:#007a37"></i>
<i style="left:1031px;top:539px;width:12px;height:12px;background:#008c40"></i>
<i style="left:1006px;top:551px;width:1px;height:12px;background:#13b45e"></i>
<i style="left:1007px;top:551px;width:12px;height:12px;background:#13b35d"></i>
<i style="left:1019px;top:551px;width:12px;height:12px;background:#13af5c"></i>
<i style="left:1031px;top:551px;width:12px;height:12px;background:#13b25d"></i>
<i style="left:1007px;top:563px;width:12px;height:12px;background:#00ac4f"></i>
<i style="left:1019px;top:563px;width:12px;height:12px;background:#00a54b"></i>
<i style="left:1031px;top:563px;width:12px;height:12px;background:#00a84d"></i>
<i style="left:1007px;top:575px;width:12px;height:12px;background:#009a47"></i>
<i style="left:1019px;top:575px;width:12px;height:12px;background:#007f3a"></i>
<i style="left:1031px;top:575px;width:12px;height:12px;background:#009142"></i>
<i style="left:1006px;top:587px;width:1px;height:12px;background:#13b45e"></i>
<i style="left:1007px;top:587px;width:12px;height:12px;background:#13b45e"></i>
<i style="left:1019px;top:587px;width:12px;height:12px;background:#13b45e"></i>
<i style="left:1031px;top:587px;width:12px;height:12px;background:#13b45e"></i>
<i style="left:1007px;top:599px;width:12px;height:12px;background:#00a54b"></i>
<i style="left:1019px;top:599px;width:12px;height:12px;background:#009544"></i>
<i style="left:1031px;top:599px;width:12px;height:12px;background:#009c47"></i>
<i style="left:1007px;top:611px;width:12px;height:12px;background:#00a24a"></i>
<i style="left:1019px;top:611px;width:12px;height:12px;background:#008f41"></i>
<i style="left:1031px;top:611px;width:12px;height:12px;background:#009d48"></i>
<i style="left:1016px;top:623px;width:3px;height:4px;background:#a8e3c4"></i>
<i style="left:1019px;top:623px;width:12px;height:4px;background:#a8e3c4"></i>
<i style="left:1031px;top:623px;width:9px;height:4px;background:#a8e3c4"></i>
<i style="left:1022px;top:627px;width:9px;height:4px;background:#a8e3c4"></i>
<i style="left:1031px;top:627px;width:3px;height:4px;background:#a8e3c4"></i>
<i style="left:1081.3px;top:177px;width:9.7px;height:2px;background:#f7f700"></i>
<i style="left:1091px;top:177px;width:12px;height:2px;background:#f4f400"></i>
<i style="left:1103px;top:177px;width:2.8px;height:2px;background:#f1f100"></i>
<i style="left:1081.3px;top:179px;width:9.7px;height:12px;background:#cece00"></i>
<i style="left:1091px;top:179px;width:12px;height:12px;background:#c6c600"></i>
<i style="left:1103px;top:179px;width:2.8px;height:12px;background:#dada00"></i>
<i style="left:1081.3px;top:191px;width:9.7px;height:12px;background:#fdfe6a"></i>
<i style="left:1091px;top:191px;width:12px;height:12px;background:#fdfe6a"></i>
<i style="left:1103px;top:191px;width:2.8px;height:12px;background:#fdfe6a"></i>
<i style="left:1081.3px;top:203px;width:9.7px;height:12px;background:#e8e8e8"></i>
<i style="left:1091px;top:203px;width:12px;height:12px;background:#e0e0e0"></i>
<i style="left:1103px;top:203px;width:2.8px;height:12px;background:#e5e5e5"></i>
<i style="left:1081.3px;top:215px;width:9.7px;height:12px;background:#dddddd"></i>
<i style="left:1091px;top:215px;width:12px;height:12px;background:#dadada"></i>
<i style="left:1103px;top:215px;width:2.8px;height:12px;background:#e6e6e6"></i>
<i style="left:1081.3px;top:227px;width:9.7px;height:12px;background:#fdfefe"></i>
<i style="left:1091px;top:227px;width:12px;height:12px;background:#fdfefe"></i>
<i style="left:1103px;top:227px;width:2.8px;height:12px;background:#fdfefe"></i>
<i style="left:1081.3px;top:239px;width:9.7px;height:12px;background:#dbdbdb"></i>
<i style="left:1091px;top:239px;width:12px;height:12px;background:#c5c5c5"></i>
<i style="left:1103px;top:239px;width:2.8px;height:12px;background:#c6c6c6"></i>
<i style="left:1081.3px;top:251px;width:9.7px;height:12px;background:#f0f0f0"></i>
<i style="left:1091px;top:251px;width:12px;height:12px;background:#e6e6e6"></i>
<i style="left:1103px;top:251px;width:2.8px;height:12px;background:#e8e8e8"></i>
<i style="left:1081.3px;top:263px;width:9.7px;height:12px;background:#fdfefe"></i>
<i style="left:1091px;top:263px;width:12px;height:12px;background:#fdfefe"></i>
<i style="left:1103px;top:263px;width:2.8px;height:12px;background:#fdfefe"></i>
<i style="left:1081.3px;top:275px;width:9.7px;height:12px;background:#cecece"></i>
<i style="left:1091px;top:275px;width:12px;height:12px;background:#b0b0b0"></i>
<i style="left:1103px;top:275px;width:2.8px;height:12px;background:#b7b7b7"></i>
<i style="left:1081.3px;top:287px;width:9.7px;height:12px;background:#fbfcfd"></i>
<i style="left:1091px;top:287px;width:12px;height:12px;background:#f9fafb"></i>
<i style="left:1103px;top:287px;width:2.8px;height:12px;background:#f6f6f7"></i>
<i style="left:1081.3px;top:299px;width:9.7px;height:12px;background:#f7f7f7"></i>
<i style="left:1091px;top:299px;width:12px;height:12px;background:#f4f4f4"></i>
<i style="left:1103px;top:299px;width:2.8px;height:12px;background:#f1f1f1"></i>
<i style="left:1081.3px;top:311px;width:9.7px;height:12px;background:#cecece"></i>
<i style="left:1091px;top:311px;width:12px;height:12px;background:#c6c6c6"></i>
<i style="left:1103px;top:311px;width:2.8px;height:12px;background:#dadada"></i>
<i style="left:1081.3px;top:323px;width:9.7px;height:12px;background:#a8e3c4"></i>
<i style="left:1091px;top:323px;width:12px;height:12px;background:#a8e3c4"></i>
<i style="left:1103px;top:323px;width:2.8px;height:12px;background:#a8e3c4"></i>
<i style="left:1081.3px;top:335px;width:9.7px;height:12px;background:#009f49"></i>
<i style="left:1091px;top:335px;width:12px;height:12px;background:#009946"></i>
<i style="left:1103px;top:335px;width:2.8px;height:12px;background:#009745"></i>
<i style="left:1081.3px;top:347px;width:9.7px;height:12px;background:#009c47"></i>
<i style="left:1091px;top:347px;width:12px;height:12px;background:#008c40"></i>
<i style="left:1103px;top:347px;width:2.8px;height:12px;background:#009142"></i>
<i style="left:1081.3px;top:359px;width:9.7px;height:12px;background:#a7d790"></i>
<i style="left:1091px;top:359px;width:12px;height:12px;background:#a7d790"></i>
<i style="left:1103px;top:359px;width:2.8px;height:12px;background:#a7d790"></i>
<i style="left:1081.3px;top:371px;width:9.7px;height:12px;background:#d9c98e"></i>
<i style="left:1091px;top:371px;width:12px;height:12px;background:#cbbc85"></i>
<i style="left:1103px;top:371px;width:2.8px;height:12px;background:#d4c48a"></i>
<i style="left:1081.3px;top:383px;width:9.7px;height:12px;background:#e8d697"></i>
<i style="left:1091px;top:383px;width:12px;height:12px;background:#ebd999"></i>
<i style="left:1103px;top:383px;width:2.8px;height:12px;background:#f3e19f"></i>
<i style="left:1081.3px;top:395px;width:9.7px;height:12px;background:#28b965"></i>
<i style="left:1091px;top:395px;width:12px;height:12px;background:#28b965"></i>
<i style="left:1103px;top:395px;width:2.8px;height:12px;background:#28b965"></i>
<i style="left:1081.3px;top:407px;width:9.7px;height:12px;background:#00883e"></i>
<i style="left:1091px;top:407px;width:12px;height:12px;background:#00803a"></i>
<i style="left:1103px;top:407px;width:2.8px;height:12px;background:#008c40"></i>
<i style="left:1081.3px;top:419px;width:9.7px;height:11px;background:#13b45e"></i>
<i style="left:1091px;top:419px;width:12px;height:11px;background:#13b45e"></i>
<i style="left:1103px;top:419px;width:2.8px;height:11px;background:#13b45e"></i>
<i style="left:1082.9px;top:430px;width:8.1px;height:1px;background:#13b45e"></i>
<i style="left:1091px;top:430px;width:12px;height:1px;background:#13b45e"></i>
<i style="left:1103px;top:430px;width:3.6px;height:1px;background:#13b45e"></i>
<i style="left:1082.9px;top:431px;width:8.1px;height:12px;background:#00a94d"></i>
<i style="left:1091px;top:431px;width:12px;height:12px;background:#00a84d"></i>
<i style="left:1103px;top:431px;width:3.6px;height:12px;background:#00a64c"></i>
<i style="left:1082.9px;top:443px;width:8.1px;height:12px;background:#008d40"></i>
<i style="left:1091px;top:443px;width:12px;height:12px;background:#00883e"></i>
<i style="left:1103px;top:443px;width:3.6px;height:12px;background:#009544"></i>
<i style="left:1082.9px;top:455px;width:8.1px;height:12px;background:#13b45e"></i>
<i style="left:1091px;top:455px;width:12px;height:12px;background:#13b45e"></i>
<i style="left:1103px;top:455px;width:3.6px;height:12px;background:#13b45e"></i>
<i style="left:1082.9px;top:467px;width:8.1px;height:12px;background:#009f49"></i>
<i style="left:1091px;top:467px;width:12px;height:12px;background:#009a46"></i>
<i style="left:1103px;top:467px;width:3.6px;height:12px;background:#009d48"></i>
<i style="left:1082.9px;top:479px;width:8.1px;height:12px;background:#009745"></i>
<i style="left:1091px;top:479px;width:12px;height:12px;background:#009644"></i>
<i style="left:1103px;top:479px;width:3.6px;height:12px;background:#009e48"></i>
<i style="left:1082.9px;top:491px;width:8.1px;height:12px;background:#13b45e"></i>
<i style="left:1091px;top:491px;width:12px;height:12px;background:#13b45e"></i>
<i style="left:1103px;top:491px;width:3.6px;height:12px;background:#13b45e"></i>
<i style="left:1082.9px;top:503px;width:8.1px;height:12px;background:#009645"></i>
<i style="left:1091px;top:503px;width:12px;height:12px;background:#008d40"></i>
<i style="left:1103px;top:503px;width:3.6px;height:12px;background:#009343"></i>
<i style="left:1082.9px;top:515px;width:8.1px;height:12px;background:#00a049"></i>
<i style="left:1091px;top:515px;width:12px;height:12px;background:#00a34a"></i>
<i style="left:1103px;top:515px;width:3.6px;height:12px;background:#00a84d"></i>
<i style="left:1082.9px;top:527px;width:8.1px;height:3px;background:#13b45e"></i>
<i style="left:1091px;top:527px;width:12px;height:3px;background:#13b45e"></i>
<i style="left:1103px;top:527px;width:3.6px;height:3px;background:#13b45e"></i>
<i style="left:1127px;top:157px;width:12px;height:10px;background:#ebebd6"></i>
<i style="left:1139px;top:157px;width:11px;height:10px;background:#eaead4"></i>
<i style="left:1117px;top:167px;width:10px;height:12px;background:#f7f700"></i>
<i style="left:1127px;top:167px;width:12px;height:12px;background:#fafa00"></i>
<i style="left:1139px;top:167px;width:12px;height:12px;background:#f3f300"></i>
<i style="left:1151px;top:167px;width:4px;height:12px;background:#fafa00"></i>
<i style="left:1117px;top:179px;width:10px;height:6px;background:#cece00"></i>
<i style="left:1127px;top:179px;width:12px;height:6px;background:#cece00"></i>
<i style="left:1139px;top:179px;width:12px;height:6px;background:#c9c900"></i>
<i style="left:1151px;top:179px;width:4px;height:6px;background:#d9d900"></i>
<i style="left:1110px;top:185px;width:5px;height:6px;background:#dada00"></i>
<i style="left:1115px;top:185px;width:12px;height:6px;background:#cece00"></i>
<i style="left:1127px;top:185px;width:12px;height:6px;background:#cece00"></i>
<i style="left:1139px;top:185px;width:12px;height:6px;background:#c9c900"></i>
<i style="left:1151px;top:185px;width:4px;height:6px;background:#d9d900"></i>
<i style="left:1110px;top:191px;width:5px;height:9px;background:#fdfe6a"></i>
<i style="left:1115px;top:191px;width:12px;height:9px;background:#fdfe6a"></i>
<i style="left:1127px;top:191px;width:12px;height:9px;background:#fdfe6a"></i>
<i style="left:1139px;top:191px;width:12px;height:9px;background:#fdfe6a"></i>
<i style="left:1151px;top:191px;width:4px;height:9px;background:#fdfe6a"></i>
<i style="left:1110px;top:200px;width:5px;height:3px;background:#fdfe6a"></i>
<i style="left:1115px;top:200px;width:12px;height:3px;background:#fdfe6a"></i>
<i style="left:1127px;top:200px;width:12px;height:3px;background:#fdfe6a"></i>
<i style="left:1139px;top:200px;width:12px;height:3px;background:#fdfe6a"></i>
<i style="left:1151px;top:200px;width:4px;height:3px;background:#fdfe6a"></i>
<i style="left:1110px;top:203px;width:5px;height:12px;background:#e5e5e5"></i>
<i style="left:1115px;top:203px;width:12px;height:12px;background:#e9e9e9"></i>
<i style="left:1127px;top:203px;width:12px;height:12px;background:#eaeaea"></i>
<i style="left:1139px;top:203px;width:12px;height:12px;background:#e0e0e0"></i>
<i style="left:1151px;top:203px;width:4px;height:12px;background:#ededed"></i>
<i style="left:1110px;top:215px;width:5px;height:12px;background:#e6e6e6"></i>
<i style="left:1115px;top:215px;width:12px;height:12px;background:#dcdcdc"></i>
<i style="left:1127px;top:215px;width:12px;height:12px;background:#dedede"></i>
<i style="left:1139px;top:215px;width:12px;height:12px;background:#dcdcdc"></i>
<i style="left:1151px;top:215px;width:4px;height:12px;background:#e5e5e5"></i>
<i style="left:1110px;top:227px;width:5px;height:12px;background:#fdfefe"></i>
<i style="left:1115px;top:227px;width:12px;height:12px;background:#fdfefe"></i>
<i style="left:1127px;top:227px;width:12px;height:12px;background:#fdfefe"></i>
<i style="left:1139px;top:227px;width:12px;height:12px;background:#fdfefe"></i>
<i style="left:1151px;top:227px;width:4px;height:12px;background:#fdfefe"></i>
<i style="left:1110px;top:239px;width:5px;height:12px;background:#c6c6c6"></i>
<i style="left:1115px;top:239px;width:12px;height:12px;background:#d5d5d5"></i>
<i style="left:1127px;top:239px;width:12px;height:12px;background:#c3c3c3"></i>
<i style="left:1139px;top:239px;width:12px;height:12px;background:#e4e4e4"></i>
<i style="left:1110px;top:251px;width:5px;height:12px;background:#e8e8e8"></i>
<i style="left:1115px;top:251px;width:12px;height:12px;background:#ebebeb"></i>
<i style="left:1127px;top:251px;width:12px;height:12px;background:#e9e9e9"></i>
<i style="left:1139px;top:251px;width:12px;height:12px;background:#f2f2f2"></i>
<i style="left:1110px;top:263px;width:5px;height:12px;background:#fdfefe"></i>
<i style="left:1115px;top:263px;width:12px;height:12px;background:#fdfefe"></i>
<i style="left:1127px;top:263px;width:12px;height:12px;background:#fdfefe"></i>
<i style="left:1139px;top:263px;width:12px;height:12px;background:#fdfefe"></i>
<i style="left:1151px;top:263px;width:4px;height:12px;background:#fdfefe"></i>
<i style="left:1110px;top:275px;width:5px;height:12px;background:#b7b7b7"></i>
<i style="left:1115px;top:275px;width:12px;height:12px;background:#c5c5c5"></i>
<i style="left:1127px;top:275px;width:12px;height:12px;background:#afafaf"></i>
<i style="left:1139px;top:275px;width:12px;height:12px;background:#d8d8d8"></i>
<i style="left:1110px;top:287px;width:5px;height:12px;background:#f6f6f7"></i>
<i style="left:1115px;top:287px;width:12px;height:12px;background:#f9fafa"></i>
<i style="left:1127px;top:287px;width:12px;height:12px;background:#fafbfc"></i>
<i style="left:1139px;top:287px;width:12px;height:12px;background:#fdfefe"></i>
<i style="left:1151px;top:287px;width:4px;height:12px;background:#fdfefe"></i>
<i style="left:1110px;top:299px;width:5px;height:12px;background:#f1f1f1"></i>
<i style="left:1115px;top:299px;width:12px;height:12px;background:#f7f7f7"></i>
<i style="left:1127px;top:299px;width:12px;height:12px;background:#fafafa"></i>
<i style="left:1139px;top:299px;width:12px;height:12px;background:#f3f3f3"></i>
<i style="left:1151px;top:299px;width:4px;height:12px;background:#fafafa"></i>
<i style="left:1110px;top:311px;width:5px;height:12px;background:#dadada"></i>
<i style="left:1115px;top:311px;width:12px;height:12px;background:#cecece"></i>
<i style="left:1127px;top:311px;width:12px;height:12px;background:#cecece"></i>
<i style="left:1139px;top:311px;width:12px;height:12px;background:#c9c9c9"></i>
<i style="left:1151px;top:311px;width:4px;height:12px;background:#d9d9d9"></i>
<i style="left:1110px;top:323px;width:5px;height:12px;background:#a8e3c4"></i>
<i style="left:1115px;top:323px;width:12px;height:12px;background:#a8e3c4"></i>
<i style="left:1127px;top:323px;width:12px;height:12px;background:#a8e3c4"></i>
<i style="left:1139px;top:323px;width:12px;height:12px;background:#a8e3c4"></i>
<i style="left:1151px;top:323px;width:4px;height:12px;background:#a8e3c4"></i>
<i style="left:1110px;top:335px;width:5px;height:12px;background:#009745"></i>
<i style="left:1115px;top:335px;width:12px;height:12px;background:#009a46"></i>
<i style="left:1127px;top:335px;width:12px;height:12px;background:#009343"></i>
<i style="left:1139px;top:335px;width:12px;height:12px;background:#00a54b"></i>
<i style="left:1110px;top:347px;width:5px;height:12px;background:#009142"></i>
<i style="left:1115px;top:347px;width:12px;height:12px;background:#009946"></i>
<i style="left:1127px;top:347px;width:12px;height:12px;background:#009243"></i>
<i style="left:1139px;top:347px;width:12px;height:12px;background:#009e48"></i>
<i style="left:1110px;top:359px;width:5px;height:12px;background:#a7d790"></i>
<i style="left:1115px;top:359px;width:12px;height:12px;background:#a7d790"></i>
<i style="left:1127px;top:359px;width:12px;height:12px;background:#a7d790"></i>
<i style="left:1139px;top:359px;width:12px;height:12px;background:#a7d790"></i>
<i style="left:1151px;top:359px;width:4px;height:12px;background:#a7d790"></i>
<i style="left:1110px;top:371px;width:5px;height:12px;background:#d4c48a"></i>
<i style="left:1115px;top:371px;width:12px;height:12px;background:#daca8e"></i>
<i style="left:1127px;top:371px;width:12px;height:12px;background:#d5c58b"></i>
<i style="left:1139px;top:371px;width:12px;height:12px;background:#cabb84"></i>
<i style="left:1151px;top:371px;width:4px;height:12px;background:#ddcc90"></i>
<i style="left:1110px;top:383px;width:5px;height:12px;background:#f3e19f"></i>
<i style="left:1115px;top:383px;width:12px;height:12px;background:#e7d596"></i>
<i style="left:1127px;top:383px;width:12px;height:12px;background:#f0de9c"></i>
<i style="left:1139px;top:383px;width:12px;height:12px;background:#eedc9b"></i>
<i style="left:1151px;top:383px;width:4px;height:12px;background:#f2e09e"></i>
<i style="left:1110px;top:395px;width:5px;height:12px;background:#28b965"></i>
<i style="left:1115px;top:395px;width:12px;height:12px;background:#28b965"></i>
<i style="left:1127px;top:395px;width:12px;height:12px;background:#28b965"></i>
<i style="left:1139px;top:395px;width:12px;height:12px;background:#28b965"></i>
<i style="left:1151px;top:395px;width:4px;height:12px;background:#28b965"></i>
<i style="left:1110px;top:407px;width:5px;height:12px;background:#008c40"></i>
<i style="left:1115px;top:407px;width:12px;height:12px;background:#00883e"></i>
<i style="left:1127px;top:407px;width:12px;height:12px;background:#008a3f"></i>
<i style="left:1139px;top:407px;width:12px;height:12px;background:#00823b"></i>
<i style="left:1151px;top:407px;width:4px;height:12px;background:#009142"></i>
<i style="left:1110px;top:419px;width:5px;height:11px;background:#13b45e"></i>
<i style="left:1115px;top:419px;width:12px;height:11px;background:#13b45e"></i>
<i style="left:1127px;top:419px;width:12px;height:11px;background:#13b45e"></i>
<i style="left:1139px;top:419px;width:12px;height:11px;background:#13b45e"></i>
<i style="left:1151px;top:419px;width:4px;height:11px;background:#13b45e"></i>
<i style="left:1113.8px;top:430px;width:1.2px;height:1px;background:#13b45e"></i>
<i style="left:1115px;top:430px;width:12px;height:1px;background:#13b45e"></i>
<i style="left:1127px;top:430px;width:12px;height:1px;background:#13b45e"></i>
<i style="left:1139px;top:430px;width:12px;height:1px;background:#13b45e"></i>
<i style="left:1151px;top:430px;width:1.6px;height:1px;background:#13b45e"></i>
<i style="left:1113.8px;top:431px;width:1.2px;height:12px;background:#00a64c"></i>
<i style="left:1115px;top:431px;width:12px;height:12px;background:#00a94d"></i>
<i style="left:1127px;top:431px;width:12px;height:12px;background:#00ab4e"></i>
<i style="left:1139px;top:431px;width:12px;height:12px;background:#00a74c"></i>
<i style="left:1151px;top:431px;width:1.6px;height:12px;background:#00ac4e"></i>
<i style="left:1113.8px;top:443px;width:1.2px;height:12px;background:#009544"></i>
<i style="left:1115px;top:443px;width:12px;height:12px;background:#008d40"></i>
<i style="left:1127px;top:443px;width:12px;height:12px;background:#008e41"></i>
<i style="left:1139px;top:443px;width:12px;height:12px;background:#008a3f"></i>
<i style="left:1151px;top:443px;width:1.6px;height:12px;background:#009544"></i>
<i style="left:1113.8px;top:455px;width:1.2px;height:12px;background:#13b45e"></i>
<i style="left:1115px;top:455px;width:12px;height:12px;background:#13b45e"></i>
<i style="left:1127px;top:455px;width:12px;height:12px;background:#13b45e"></i>
<i style="left:1139px;top:455px;width:12px;height:12px;background:#13b45e"></i>
<i style="left:1151px;top:455px;width:1.6px;height:12px;background:#13b45e"></i>
<i style="left:1113.8px;top:467px;width:1.2px;height:12px;background:#009d48"></i>
<i style="left:1115px;top:467px;width:12px;height:12px;background:#00a049"></i>
<i style="left:1127px;top:467px;width:12px;height:12px;background:#00a049"></i>
<i style="left:1139px;top:467px;width:12px;height:12px;background:#009946"></i>
<i style="left:1151px;top:467px;width:1.6px;height:12px;background:#00a34a"></i>
<i style="left:1113.8px;top:479px;width:1.2px;height:12px;background:#009e48"></i>
<i style="left:1115px;top:479px;width:12px;height:12px;background:#009745"></i>
<i style="left:1127px;top:479px;width:12px;height:12px;background:#009946"></i>
<i style="left:1139px;top:479px;width:12px;height:12px;background:#009745"></i>
<i style="left:1151px;top:479px;width:1.6px;height:12px;background:#009d48"></i>
<i style="left:1113.8px;top:491px;width:1.2px;height:12px;background:#13b45e"></i>
<i style="left:1115px;top:491px;width:12px;height:12px;background:#13b45e"></i>
<i style="left:1127px;top:491px;width:12px;height:12px;background:#13b45e"></i>
<i style="left:1139px;top:491px;width:12px;height:12px;background:#13b45e"></i>
<i style="left:1151px;top:491px;width:1.6px;height:12px;background:#13b45e"></i>
<i style="left:1113.8px;top:503px;width:1.2px;height:12px;background:#009343"></i>
<i style="left:1115px;top:503px;width:12px;height:12px;background:#009745"></i>
<i style="left:1127px;top:503px;width:12px;height:12px;background:#009343"></i>
<i style="left:1139px;top:503px;width:12px;height:12px;background:#008c40"></i>
<i style="left:1151px;top:503px;width:1.6px;height:12px;background:#009846"></i>
<i style="left:1113.8px;top:515px;width:1.2px;height:12px;background:#00a84d"></i>
<i style="left:1115px;top:515px;width:12px;height:12px;background:#00a049"></i>
<i style="left:1127px;top:515px;width:12px;height:12px;background:#00a64c"></i>
<i style="left:1139px;top:515px;width:12px;height:12px;background:#00a54b"></i>
<i style="left:1151px;top:515px;width:1.6px;height:12px;background:#00a84d"></i>
<i style="left:1113.8px;top:527px;width:1.2px;height:1px;background:#13b45e"></i>
<i style="left:1115px;top:527px;width:12px;height:1px;background:#13b45e"></i>
<i style="left:1127px;top:527px;width:12px;height:1px;background:#13b45e"></i>
<i style="left:1139px;top:527px;width:12px;height:1px;background:#13b45e"></i>
<i style="left:1151px;top:527px;width:1.6px;height:1px;background:#13b45e"></i>
<i style="left:1080px;top:528px;width:11px;height:11px;background:#13b45e"></i>
<i style="left:1091px;top:528px;width:12px;height:11px;background:#13b45e"></i>
<i style="left:1103px;top:528px;width:12px;height:11px;background:#13b45e"></i>
<i style="left:1115px;top:528px;width:12px;height:11px;background:#13b45e"></i>
<i style="left:1127px;top:528px;width:12px;height:11px;background:#13b45e"></i>
<i style="left:1139px;top:528px;width:9px;height:11px;background:#13b45e"></i>
<i style="left:1080px;top:539px;width:11px;height:12px;background:#00883e"></i>
<i style="left:1091px;top:539px;width:12px;height:12px;background:#00803a"></i>
<i style="left:1103px;top:539px;width:12px;height:12px;background:#008c40"></i>
<i style="left:1115px;top:539px;width:12px;height:12px;background:#00883e"></i>
<i style="left:1127px;top:539px;width:12px;height:12px;background:#008a3f"></i>
<i style="left:1139px;top:539px;width:9px;height:12px;background:#00823b"></i>
<i style="left:1080px;top:551px;width:11px;height:11px;background:#13b45e"></i>
<i style="left:1091px;top:551px;width:12px;height:11px;background:#13b45e"></i>
<i style="left:1103px;top:551px;width:12px;height:11px;background:#13b45e"></i>
<i style="left:1115px;top:551px;width:12px;height:11px;background:#13b45e"></i>
<i style="left:1127px;top:551px;width:12px;height:11px;background:#13b45e"></i>
<i style="left:1139px;top:551px;width:9px;height:11px;background:#13b45e"></i>
<i style="left:1080px;top:562px;width:11px;height:1px;background:#13b45e"></i>
<i style="left:1091px;top:562px;width:12px;height:1px;background:#13b45e"></i>
<i style="left:1103px;top:562px;width:12px;height:1px;background:#13b45e"></i>
<i style="left:1115px;top:562px;width:12px;height:1px;background:#13b45e"></i>
<i style="left:1127px;top:562px;width:12px;height:1px;background:#13b45e"></i>
<i style="left:1139px;top:562px;width:3px;height:1px;background:#13b45e"></i>
<i style="left:1080px;top:563px;width:11px;height:12px;background:#00a94d"></i>
<i style="left:1091px;top:563px;width:12px;height:12px;background:#00a84d"></i>
<i style="left:1103px;top:563px;width:12px;height:12px;background:#00a64c"></i>
<i style="left:1115px;top:563px;width:12px;height:12px;background:#00a94d"></i>
<i style="left:1127px;top:563px;width:12px;height:12px;background:#00ab4e"></i>
<i style="left:1139px;top:563px;width:3px;height:12px;background:#00a94d"></i>
<i style="left:1080px;top:575px;width:11px;height:12px;background:#008d40"></i>
<i style="left:1091px;top:575px;width:12px;height:12px;background:#00883e"></i>
<i style="left:1103px;top:575px;width:12px;height:12px;background:#009544"></i>
<i style="left:1115px;top:575px;width:12px;height:12px;background:#008d41"></i>
<i style="left:1127px;top:575px;width:12px;height:12px;background:#008e41"></i>
<i style="left:1139px;top:575px;width:3px;height:12px;background:#00863d"></i>
<i style="left:1080px;top:587px;width:11px;height:8px;background:#13b45e"></i>
<i style="left:1091px;top:587px;width:12px;height:8px;background:#13b45e"></i>
<i style="left:1103px;top:587px;width:12px;height:8px;background:#13b45e"></i>
<i style="left:1115px;top:587px;width:12px;height:8px;background:#13b45e"></i>
<i style="left:1127px;top:587px;width:12px;height:8px;background:#13b45e"></i>
<i style="left:1139px;top:587px;width:3px;height:8px;background:#13b45e"></i>
<i style="left:1083px;top:595px;width:8px;height:4px;background:#13b45e"></i>
<i style="left:1091px;top:595px;width:12px;height:4px;background:#13b45e"></i>
<i style="left:1103px;top:595px;width:12px;height:4px;background:#13b45e"></i>
<i style="left:1115px;top:595px;width:12px;height:4px;background:#13b45e"></i>
<i style="left:1127px;top:595px;width:12px;height:4px;background:#13b45e"></i>
<i style="left:1139px;top:595px;width:6.6px;height:4px;background:#13b45e"></i>
<i style="left:1083px;top:599px;width:8px;height:12px;background:#009f49"></i>
<i style="left:1091px;top:599px;width:12px;height:12px;background:#009a46"></i>
<i style="left:1103px;top:599px;width:12px;height:12px;background:#009d48"></i>
<i style="left:1115px;top:599px;width:12px;height:12px;background:#00a049"></i>
<i style="left:1127px;top:599px;width:12px;height:12px;background:#00a049"></i>
<i style="left:1139px;top:599px;width:6.6px;height:12px;background:#009946"></i>
<i style="left:1083px;top:611px;width:8px;height:12px;background:#009745"></i>
<i style="left:1091px;top:611px;width:12px;height:12px;background:#009644"></i>
<i style="left:1103px;top:611px;width:12px;height:12px;background:#009e48"></i>
<i style="left:1115px;top:611px;width:12px;height:12px;background:#009745"></i>
<i style="left:1127px;top:611px;width:12px;height:12px;background:#009946"></i>
<i style="left:1139px;top:611px;width:6.6px;height:12px;background:#009745"></i>
<i style="left:1085px;top:623px;width:6px;height:6px;background:#a8e3c4"></i>
<i style="left:1091px;top:623px;width:12px;height:6px;background:#a8e3c4"></i>
<i style="left:1103px;top:623px;width:7px;height:6px;background:#a8e3c4"></i>
<i style="left:1264.7px;top:175px;width:6.3px;height:4px;background:#f9f900"></i>
<i style="left:1271px;top:175px;width:12px;height:4px;background:#f0f000"></i>
<i style="left:1283px;top:175px;width:5.3px;height:4px;background:#f8f800"></i>
<i style="left:1264.7px;top:179px;width:6.3px;height:12px;background:#ebeb00"></i>
<i style="left:1271px;top:179px;width:12px;height:12px;background:#bbbb00"></i>
<i style="left:1283px;top:179px;width:5.3px;height:12px;background:#dcdc00"></i>
<i style="left:1264.7px;top:191px;width:6.3px;height:12px;background:#fdfe6a"></i>
<i style="left:1271px;top:191px;width:12px;height:12px;background:#fdfe6a"></i>
<i style="left:1283px;top:191px;width:5.3px;height:12px;background:#fdfe6a"></i>
<i style="left:1264.7px;top:203px;width:6.3px;height:12px;background:#f2f2f2"></i>
<i style="left:1271px;top:203px;width:12px;height:12px;background:#dadada"></i>
<i style="left:1283px;top:203px;width:5.3px;height:12px;background:#efefef"></i>
<i style="left:1264.7px;top:215px;width:6.3px;height:12px;background:#f2f2f2"></i>
<i style="left:1271px;top:215px;width:12px;height:12px;background:#d0d0d0"></i>
<i style="left:1283px;top:215px;width:5.3px;height:12px;background:#e6e6e6"></i>
<i style="left:1264.7px;top:227px;width:6.3px;height:12px;background:#fdfefe"></i>
<i style="left:1271px;top:227px;width:12px;height:12px;background:#fdfefe"></i>
<i style="left:1283px;top:227px;width:5.3px;height:12px;background:#fdfefe"></i>
<i style="left:1264.7px;top:239px;width:6.3px;height:12px;background:#eeeeee"></i>
<i style="left:1271px;top:239px;width:12px;height:12px;background:#c5c5c5"></i>
<i style="left:1283px;top:239px;width:5.3px;height:12px;background:#e3e3e3"></i>
<i style="left:1264.7px;top:251px;width:6.3px;height:12px;background:#f6f6f6"></i>
<i style="left:1271px;top:251px;width:12px;height:12px;background:#e5e5e5"></i>
<i style="left:1283px;top:251px;width:5.3px;height:12px;background:#f1f1f1"></i>
<i style="left:1264.7px;top:263px;width:6.3px;height:12px;background:#fdfefe"></i>
<i style="left:1271px;top:263px;width:12px;height:12px;background:#fdfefe"></i>
<i style="left:1283px;top:263px;width:5.3px;height:12px;background:#fdfefe"></i>
<i style="left:1264.7px;top:275px;width:6.3px;height:12px;background:#e7e7e7"></i>
<i style="left:1271px;top:275px;width:12px;height:12px;background:#aeaeae"></i>
<i style="left:1283px;top:275px;width:5.3px;height:12px;background:#d6d6d6"></i>
<i style="left:1264.7px;top:287px;width:6.3px;height:12px;background:#fbfbfc"></i>
<i style="left:1271px;top:287px;width:12px;height:12px;background:#fbfcfc"></i>
<i style="left:1283px;top:287px;width:5.3px;height:12px;background:#fcfcfd"></i>
<i style="left:1264.7px;top:299px;width:6.3px;height:12px;background:#f9f9f9"></i>
<i style="left:1271px;top:299px;width:12px;height:12px;background:#f0f0f0"></i>
<i style="left:1283px;top:299px;width:5.3px;height:12px;background:#f8f8f8"></i>
<i style="left:1264.7px;top:311px;width:6.3px;height:12px;background:#ebebeb"></i>
<i style="left:1271px;top:311px;width:12px;height:12px;background:#bbbbbb"></i>
<i style="left:1283px;top:311px;width:5.3px;height:12px;background:#dcdcdc"></i>
<i style="left:1264.7px;top:323px;width:6.3px;height:12px;background:#a8e3c4"></i>
<i style="left:1271px;top:323px;width:12px;height:12px;background:#a8e3c4"></i>
<i style="left:1283px;top:323px;width:5.3px;height:12px;background:#a8e3c4"></i>
<i style="left:1264.7px;top:335px;width:6.3px;height:12px;background:#00a64c"></i>
<i style="left:1271px;top:335px;width:12px;height:12px;background:#009644"></i>
<i style="left:1283px;top:335px;width:5.3px;height:12px;background:#00a44b"></i>
<i style="left:1264.7px;top:347px;width:6.3px;height:12px;background:#00a64c"></i>
<i style="left:1271px;top:347px;width:12px;height:12px;background:#008f41"></i>
<i style="left:1283px;top:347px;width:5.3px;height:12px;background:#009e48"></i>
<i style="left:1264.7px;top:359px;width:6.3px;height:12px;background:#a7d790"></i>
<i style="left:1271px;top:359px;width:12px;height:12px;background:#a7d790"></i>
<i style="left:1283px;top:359px;width:5.3px;height:12px;background:#a7d790"></i>
<i style="left:1264.7px;top:371px;width:6.3px;height:12px;background:#ecda9a"></i>
<i style="left:1271px;top:371px;width:12px;height:12px;background:#c4b580"></i>
<i style="left:1283px;top:371px;width:5.3px;height:12px;background:#e1d093"></i>
<i style="left:1264.7px;top:383px;width:6.3px;height:12px;background:#f4e29f"></i>
<i style="left:1271px;top:383px;width:12px;height:12px;background:#e4d294"></i>
<i style="left:1283px;top:383px;width:5.3px;height:12px;background:#efdd9c"></i>
<i style="left:1264.7px;top:395px;width:6.3px;height:1px;background:#28b965"></i>
<i style="left:1271px;top:395px;width:12px;height:1px;background:#28b965"></i>
<i style="left:1283px;top:395px;width:5.3px;height:1px;background:#28b965"></i>
<i style="left:1262px;top:396px;width:9px;height:11px;background:#28b965"></i>
<i style="left:1271px;top:396px;width:12px;height:11px;background:#28b965"></i>
<i style="left:1283px;top:396px;width:10.7px;height:11px;background:#28b965"></i>
<i style="left:1262px;top:407px;width:9px;height:12px;background:#009f48"></i>
<i style="left:1271px;top:407px;width:12px;height:12px;background:#007736"></i>
<i style="left:1283px;top:407px;width:10.7px;height:12px;background:#009343"></i>
<i style="left:1262px;top:419px;width:9px;height:12px;background:#13b35d"></i>
<i style="left:1271px;top:419px;width:12px;height:12px;background:#13b35d"></i>
<i style="left:1283px;top:419px;width:10.7px;height:12px;background:#13b35e"></i>
<i style="left:1262px;top:431px;width:9px;height:12px;background:#00ab4e"></i>
<i style="left:1271px;top:431px;width:12px;height:12px;background:#00a44b"></i>
<i style="left:1283px;top:431px;width:10.7px;height:12px;background:#00aa4e"></i>
<i style="left:1262px;top:443px;width:9px;height:12px;background:#00a14a"></i>
<i style="left:1271px;top:443px;width:12px;height:12px;background:#00803b"></i>
<i style="left:1283px;top:443px;width:10.7px;height:12px;background:#009745"></i>
<i style="left:1262px;top:455px;width:9px;height:12px;background:#13b45e"></i>
<i style="left:1271px;top:455px;width:12px;height:12px;background:#13b45e"></i>
<i style="left:1283px;top:455px;width:10.7px;height:12px;background:#13b45e"></i>
<i style="left:1262px;top:467px;width:9px;height:12px;background:#00a64c"></i>
<i style="left:1271px;top:467px;width:12px;height:12px;background:#009644"></i>
<i style="left:1283px;top:467px;width:10.7px;height:12px;background:#00a44b"></i>
<i style="left:1262px;top:479px;width:9px;height:12px;background:#00a64c"></i>
<i style="left:1271px;top:479px;width:12px;height:12px;background:#008f41"></i>
<i style="left:1283px;top:479px;width:10.7px;height:12px;background:#009e48"></i>
<i style="left:1262px;top:491px;width:9px;height:12px;background:#13b45e"></i>
<i style="left:1271px;top:491px;width:12px;height:12px;background:#13b45e"></i>
<i style="left:1283px;top:491px;width:10.7px;height:12px;background:#13b45e"></i>
<i style="left:1262px;top:503px;width:9px;height:12px;background:#00a34a"></i>
<i style="left:1271px;top:503px;width:12px;height:12px;background:#00873e"></i>
<i style="left:1283px;top:503px;width:10.7px;height:12px;background:#009c47"></i>
<i style="left:1262px;top:515px;width:9px;height:12px;background:#00a94d"></i>
<i style="left:1271px;top:515px;width:12px;height:12px;background:#009d48"></i>
<i style="left:1283px;top:515px;width:10.7px;height:12px;background:#00a54c"></i>
<i style="left:1262px;top:527px;width:9px;height:12px;background:#13b45e"></i>
<i style="left:1271px;top:527px;width:12px;height:12px;background:#13b45e"></i>
<i style="left:1283px;top:527px;width:10.7px;height:12px;background:#13b45e"></i>
<i style="left:1262px;top:539px;width:9px;height:12px;background:#009f48"></i>
<i style="left:1271px;top:539px;width:12px;height:12px;background:#007736"></i>
<i style="left:1283px;top:539px;width:10.7px;height:12px;background:#009343"></i>
<i style="left:1262px;top:551px;width:9px;height:12px;background:#13b35d"></i>
<i style="left:1271px;top:551px;width:12px;height:12px;background:#13b35d"></i>
<i style="left:1283px;top:551px;width:10.7px;height:12px;background:#13b35e"></i>
<i style="left:1262px;top:563px;width:9px;height:12px;background:#00ab4e"></i>
<i style="left:1271px;top:563px;width:12px;height:12px;background:#00a44b"></i>
<i style="left:1283px;top:563px;width:10.7px;height:12px;background:#00aa4e"></i>
<i style="left:1262px;top:575px;width:9px;height:12px;background:#00a14a"></i>
<i style="left:1271px;top:575px;width:12px;height:12px;background:#00803b"></i>
<i style="left:1283px;top:575px;width:10.7px;height:12px;background:#009745"></i>
<i style="left:1262px;top:587px;width:9px;height:12px;background:#13b45e"></i>
<i style="left:1271px;top:587px;width:12px;height:12px;background:#13b45e"></i>
<i style="left:1283px;top:587px;width:10.7px;height:12px;background:#13b45e"></i>
<i style="left:1262px;top:599px;width:9px;height:12px;background:#00a64c"></i>
<i style="left:1271px;top:599px;width:12px;height:12px;background:#009644"></i>
<i style="left:1283px;top:599px;width:10.7px;height:12px;background:#00a44b"></i>
<i style="left:1262px;top:611px;width:9px;height:10px;background:#00a64c"></i>
<i style="left:1271px;top:611px;width:12px;height:10px;background:#008f41"></i>
<i style="left:1283px;top:611px;width:10.7px;height:10px;background:#009e48"></i>
<i style="left:1607px;top:242px;width:12px;height:9px;background:#c7c7c7"></i>
<i style="left:1619px;top:242px;width:11px;height:9px;background:#dddddd"></i>
<i style="left:1607px;top:251px;width:12px;height:12px;background:#dedede"></i>
<i style="left:1619px;top:251px;width:11px;height:12px;background:#eaeaea"></i>
<i style="left:1607px;top:263px;width:12px;height:12px;background:#fdfefe"></i>
<i style="left:1619px;top:263px;width:11px;height:12px;background:#fdfefe"></i>
<i style="left:1607px;top:275px;width:12px;height:12px;background:#b6b6b6"></i>
<i style="left:1619px;top:275px;width:11px;height:12px;background:#c7c7c7"></i>
<i style="left:1607px;top:287px;width:12px;height:12px;background:#fdfefe"></i>
<i style="left:1619px;top:287px;width:11px;height:12px;background:#fdfefe"></i>
<i style="left:1607px;top:323px;width:12px;height:12px;background:#a8e3c4"></i>
<i style="left:1619px;top:323px;width:11px;height:12px;background:#a8e3c4"></i>
<i style="left:1607px;top:335px;width:12px;height:12px;background:#009a46"></i>
<i style="left:1619px;top:335px;width:11px;height:12px;background:#009f49"></i>
<i style="left:1607px;top:347px;width:12px;height:12px;background:#009243"></i>
<i style="left:1619px;top:347px;width:11px;height:12px;background:#009946"></i>
<i style="left:1607px;top:359px;width:12px;height:4px;background:#a7d790"></i>
<i style="left:1619px;top:359px;width:11px;height:4px;background:#a7d790"></i>
<i style="left:1605px;top:363px;width:2px;height:8px;background:#acd998"></i>
<i style="left:1607px;top:363px;width:12px;height:8px;background:#a7d790"></i>
<i style="left:1619px;top:363px;width:12px;height:8px;background:#a7d790"></i>
<i style="left:1631px;top:363px;width:4.7px;height:8px;background:#a7d790"></i>
<i style="left:1605px;top:371px;width:2px;height:12px;background:#eedea3"></i>
<i style="left:1607px;top:371px;width:12px;height:12px;background:#c6b781"></i>
<i style="left:1619px;top:371px;width:12px;height:12px;background:#dbcb8f"></i>
<i style="left:1631px;top:371px;width:4.7px;height:12px;background:#e4d395"></i>
<i style="left:1605px;top:383px;width:2px;height:12px;background:#f9e8aa"></i>
<i style="left:1607px;top:383px;width:12px;height:12px;background:#dccc90"></i>
<i style="left:1619px;top:383px;width:12px;height:12px;background:#e8d697"></i>
<i style="left:1631px;top:383px;width:4.7px;height:12px;background:#eddb9b"></i>
<i style="left:1605px;top:395px;width:2px;height:1px;background:#39be71"></i>
<i style="left:1607px;top:395px;width:12px;height:1px;background:#28b965"></i>
<i style="left:1619px;top:395px;width:12px;height:1px;background:#28b965"></i>
<i style="left:1631px;top:395px;width:4.7px;height:1px;background:#28b965"></i>
<i style="left:1603px;top:396px;width:4px;height:11px;background:#39be71"></i>
<i style="left:1607px;top:396px;width:12px;height:11px;background:#28b965"></i>
<i style="left:1619px;top:396px;width:12px;height:11px;background:#28b965"></i>
<i style="left:1631px;top:396px;width:12px;height:11px;background:#28b965"></i>
<i style="left:1603px;top:407px;width:4px;height:12px;background:#13b45e"></i>
<i style="left:1603px;top:419px;width:4px;height:12px;background:#25b96b"></i>
<i style="left:1607px;top:419px;width:12px;height:12px;background:#13b45e"></i>
<i style="left:1619px;top:419px;width:12px;height:12px;background:#13b45e"></i>
<i style="left:1631px;top:419px;width:12px;height:12px;background:#13b45e"></i>
<i style="left:1603px;top:431px;width:4px;height:12px;background:#13b25d"></i>
<i style="left:1607px;top:431px;width:12px;height:12px;background:#00a64c"></i>
<i style="left:1619px;top:431px;width:12px;height:12px;background:#00a24a"></i>
<i style="left:1631px;top:431px;width:12px;height:12px;background:#00aa4e"></i>
<i style="left:1603px;top:443px;width:4px;height:12px;background:#13ab5a"></i>
<i style="left:1607px;top:443px;width:12px;height:12px;background:#007b38"></i>
<i style="left:1619px;top:443px;width:12px;height:12px;background:#009645"></i>
<i style="left:1631px;top:443px;width:12px;height:12px;background:#008a3f"></i>
<i style="left:1603px;top:455px;width:4px;height:7px;background:#25b96b"></i>
<i style="left:1607px;top:455px;width:12px;height:7px;background:#13b45e"></i>
<i style="left:1619px;top:455px;width:12px;height:7px;background:#13b45e"></i>
<i style="left:1631px;top:455px;width:12px;height:7px;background:#13b45e"></i>
<i style="left:1605px;top:462px;width:2px;height:5px;background:#25b96b"></i>
<i style="left:1607px;top:462px;width:12px;height:5px;background:#13b45e"></i>
<i style="left:1619px;top:462px;width:11px;height:5px;background:#13b45e"></i>
<i style="left:1605px;top:467px;width:2px;height:12px;background:#13af5c"></i>
<i style="left:1607px;top:467px;width:12px;height:12px;background:#009a46"></i>
<i style="left:1619px;top:467px;width:11px;height:12px;background:#00883e"></i>
<i style="left:1605px;top:479px;width:2px;height:12px;background:#13ae5b"></i>
<i style="left:1607px;top:479px;width:12px;height:12px;background:#00873e"></i>
<i style="left:1619px;top:479px;width:11px;height:12px;background:#00873e"></i>
<i style="left:1605px;top:491px;width:2px;height:12px;background:#25b96b"></i>
<i style="left:1607px;top:491px;width:12px;height:12px;background:#13b45e"></i>
<i style="left:1619px;top:491px;width:11px;height:12px;background:#13b45e"></i>
<i style="left:1605px;top:503px;width:2px;height:12px;background:#13ab5a"></i>
<i style="left:1607px;top:503px;width:12px;height:12px;background:#00893e"></i>
<i style="left:1619px;top:503px;width:11px;height:12px;background:#009845"></i>
<i style="left:1605px;top:515px;width:2px;height:12px;background:#13b25d"></i>
<i style="left:1607px;top:515px;width:12px;height:12px;background:#009846"></i>
<i style="left:1619px;top:515px;width:11px;height:12px;background:#00a049"></i>
<i style="left:1605px;top:527px;width:2px;height:1px;background:#25b96b"></i>
<i style="left:1607px;top:527px;width:12px;height:1px;background:#13b45e"></i>
<i style="left:1619px;top:527px;width:11px;height:1px;background:#13b45e"></i>
<i style="left:1605px;top:528px;width:2px;height:11px;background:#25b96b"></i>
<i style="left:1607px;top:528px;width:12px;height:11px;background:#13b45e"></i>
<i style="left:1619px;top:528px;width:12px;height:11px;background:#13b45e"></i>
<i style="left:1631px;top:528px;width:1px;height:11px;background:#13b45e"></i>
<i style="left:1605px;top:539px;width:2px;height:12px;background:#13ab5a"></i>
<i style="left:1607px;top:539px;width:12px;height:12px;background:#006f33"></i>
<i style="left:1619px;top:539px;width:12px;height:12px;background:#00833c"></i>
<i style="left:1631px;top:539px;width:1px;height:12px;background:#00803a"></i>
<i style="left:1605px;top:551px;width:2px;height:12px;background:#25b86a"></i>
<i style="left:1607px;top:551px;width:12px;height:12px;background:#13a858"></i>
<i style="left:1619px;top:551px;width:12px;height:12px;background:#13a858"></i>
<i style="left:1631px;top:551px;width:1px;height:12px;background:#13ac5a"></i>
<i style="left:1605px;top:563px;width:2px;height:12px;background:#13b25d"></i>
<i style="left:1607px;top:563px;width:12px;height:12px;background:#00a64c"></i>
<i style="left:1619px;top:563px;width:12px;height:12px;background:#00a24a"></i>
<i style="left:1631px;top:563px;width:1px;height:12px;background:#00ab4e"></i>
<i style="left:1605px;top:575px;width:2px;height:12px;background:#13ab5a"></i>
<i style="left:1607px;top:575px;width:12px;height:12px;background:#007b38"></i>
<i style="left:1619px;top:575px;width:12px;height:12px;background:#009645"></i>
<i style="left:1631px;top:575px;width:1px;height:12px;background:#009444"></i>
<i style="left:1605px;top:587px;width:2px;height:12px;background:#25b96b"></i>
<i style="left:1607px;top:587px;width:12px;height:12px;background:#13b45e"></i>
<i style="left:1619px;top:587px;width:12px;height:12px;background:#13b45e"></i>
<i style="left:1631px;top:587px;width:1px;height:12px;background:#13b45e"></i>
<i style="left:1605px;top:599px;width:2px;height:12px;background:#13b15d"></i>
<i style="left:1607px;top:599px;width:12px;height:12px;background:#009042"></i>
<i style="left:1619px;top:599px;width:12px;height:12px;background:#009846"></i>
<i style="left:1631px;top:599px;width:1px;height:12px;background:#009444"></i>
<i style="left:1605px;top:611px;width:2px;height:11px;background:#13ac5a"></i>
<i style="left:1607px;top:611px;width:12px;height:11px;background:#00823b"></i>
<i style="left:1619px;top:611px;width:12px;height:11px;background:#008d41"></i>
<i style="left:1631px;top:611px;width:1px;height:11px;background:#009243"></i>
<i style="left:1704px;top:324px;width:11px;height:7px;background:#a8e3c4"></i>
<i style="left:1715px;top:324px;width:6px;height:7px;background:#a8e3c4"></i>
<i style="left:1700.4px;top:331px;width:2.6px;height:4px;background:#a8e3c4"></i>
<i style="left:1703px;top:331px;width:12px;height:4px;background:#a8e3c4"></i>
<i style="left:1715px;top:331px;width:10px;height:4px;background:#a8e3c4"></i>
<i style="left:1700.4px;top:335px;width:2.6px;height:12px;background:#009a47"></i>
<i style="left:1703px;top:335px;width:12px;height:12px;background:#009e48"></i>
<i style="left:1715px;top:335px;width:10px;height:12px;background:#00a64c"></i>
<i style="left:1700.4px;top:347px;width:2.6px;height:12px;background:#009443"></i>
<i style="left:1703px;top:347px;width:12px;height:12px;background:#009745"></i>
<i style="left:1715px;top:347px;width:10px;height:12px;background:#009a46"></i>
<i style="left:1700.4px;top:359px;width:2.6px;height:4px;background:#a7d790"></i>
<i style="left:1703px;top:359px;width:12px;height:4px;background:#a7d790"></i>
<i style="left:1715px;top:359px;width:10px;height:4px;background:#a7d790"></i>
<i style="left:1704px;top:363px;width:11px;height:8px;background:#a7d790"></i>
<i style="left:1715px;top:363px;width:12px;height:8px;background:#a7d790"></i>
<i style="left:1727px;top:363px;width:12px;height:8px;background:#a7d790"></i>
<i style="left:1739px;top:363px;width:7px;height:8px;background:#a7d790"></i>
<i style="left:1704px;top:371px;width:11px;height:12px;background:#e6d596"></i>
<i style="left:1715px;top:371px;width:12px;height:12px;background:#e7d697"></i>
<i style="left:1727px;top:371px;width:12px;height:12px;background:#bdaf7b"></i>
<i style="left:1739px;top:371px;width:7px;height:12px;background:#c2b47f"></i>
<i style="left:1704px;top:383px;width:11px;height:12px;background:#e7d697"></i>
<i style="left:1715px;top:383px;width:12px;height:12px;background:#f2e09e"></i>
<i style="left:1727px;top:383px;width:12px;height:12px;background:#dccc90"></i>
<i style="left:1739px;top:383px;width:7px;height:12px;background:#e5d395"></i>
<i style="left:1704px;top:395px;width:11px;height:1px;background:#28b965"></i>
<i style="left:1715px;top:395px;width:12px;height:1px;background:#28b965"></i>
<i style="left:1727px;top:395px;width:12px;height:1px;background:#28b965"></i>
<i style="left:1739px;top:395px;width:7px;height:1px;background:#28b965"></i>
<i style="left:1708px;top:396px;width:7px;height:11px;background:#28b965"></i>
<i style="left:1715px;top:396px;width:12px;height:11px;background:#28b965"></i>
<i style="left:1727px;top:396px;width:12px;height:11px;background:#28b965"></i>
<i style="left:1739px;top:396px;width:7px;height:11px;background:#28b965"></i>
<i style="left:1708px;top:419px;width:7px;height:11px;background:#13b45e"></i>
<i style="left:1715px;top:419px;width:12px;height:11px;background:#13b45e"></i>
<i style="left:1727px;top:419px;width:12px;height:11px;background:#13b45e"></i>
<i style="left:1739px;top:419px;width:7px;height:11px;background:#13b45e"></i>
<i style="left:1713.7px;top:430px;width:1.3px;height:1px;background:#13b45e"></i>
<i style="left:1715px;top:430px;width:12px;height:1px;background:#13b45e"></i>
<i style="left:1727px;top:430px;width:12px;height:1px;background:#13b45e"></i>
<i style="left:1739px;top:430px;width:7px;height:1px;background:#13b45e"></i>
<i style="left:1713.7px;top:431px;width:1.3px;height:12px;background:#00af50"></i>
<i style="left:1715px;top:431px;width:12px;height:12px;background:#00a44b"></i>
<i style="left:1727px;top:431px;width:12px;height:12px;background:#00a149"></i>
<i style="left:1739px;top:431px;width:7px;height:12px;background:#00a44b"></i>
<i style="left:1713.7px;top:443px;width:1.3px;height:12px;background:#009b47"></i>
<i style="left:1715px;top:443px;width:12px;height:12px;background:#008f41"></i>
<i style="left:1727px;top:443px;width:12px;height:12px;background:#00813b"></i>
<i style="left:1739px;top:443px;width:7px;height:12px;background:#009142"></i>
<i style="left:1713.7px;top:455px;width:1.3px;height:7px;background:#13b45e"></i>
<i style="left:1715px;top:455px;width:12px;height:7px;background:#13b45e"></i>
<i style="left:1727px;top:455px;width:12px;height:7px;background:#13b45e"></i>
<i style="left:1739px;top:455px;width:7px;height:7px;background:#13b45e"></i>
<i style="left:1713.7px;top:462px;width:1.3px;height:5px;background:#13b45e"></i>
<i style="left:1715px;top:462px;width:12px;height:5px;background:#13b45e"></i>
<i style="left:1727px;top:462px;width:12px;height:5px;background:#13b45e"></i>
<i style="left:1739px;top:462px;width:1px;height:5px;background:#13b45e"></i>
<i style="left:1713.7px;top:467px;width:1.3px;height:12px;background:#00ab4e"></i>
<i style="left:1715px;top:467px;width:12px;height:12px;background:#009b47"></i>
<i style="left:1727px;top:467px;width:12px;height:12px;background:#009042"></i>
<i style="left:1739px;top:467px;width:1px;height:12px;background:#009645"></i>
<i style="left:1713.7px;top:479px;width:1.3px;height:12px;background:#00a64c"></i>
<i style="left:1715px;top:479px;width:12px;height:12px;background:#009745"></i>
<i style="left:1727px;top:479px;width:12px;height:12px;background:#009243"></i>
<i style="left:1739px;top:479px;width:1px;height:12px;background:#009243"></i>
<i style="left:1713.7px;top:491px;width:1.3px;height:12px;background:#13b45e"></i>
<i style="left:1715px;top:491px;width:12px;height:12px;background:#13b45e"></i>
<i style="left:1727px;top:491px;width:12px;height:12px;background:#13b45e"></i>
<i style="left:1739px;top:491px;width:1px;height:12px;background:#13b45e"></i>
<i style="left:1713.7px;top:503px;width:1.3px;height:12px;background:#00a049"></i>
<i style="left:1715px;top:503px;width:12px;height:12px;background:#009f49"></i>
<i style="left:1727px;top:503px;width:12px;height:12px;background:#00823b"></i>
<i style="left:1739px;top:503px;width:1px;height:12px;background:#00823b"></i>
<i style="left:1713.7px;top:515px;width:1.3px;height:12px;background:#00a24a"></i>
<i style="left:1715px;top:515px;width:12px;height:12px;background:#00a74c"></i>
<i style="left:1727px;top:515px;width:12px;height:12px;background:#009c47"></i>
<i style="left:1739px;top:515px;width:1px;height:12px;background:#009e48"></i>
<i style="left:1713.7px;top:527px;width:1.3px;height:1px;background:#13b45e"></i>
<i style="left:1715px;top:527px;width:12px;height:1px;background:#13b45e"></i>
<i style="left:1727px;top:527px;width:12px;height:1px;background:#13b45e"></i>
<i style="left:1739px;top:527px;width:1px;height:1px;background:#13b45e"></i>
<i style="left:1715.6px;top:528px;width:11.4px;height:11px;background:#13b45e"></i>
<i style="left:1727px;top:528px;width:9.6px;height:11px;background:#13b45e"></i>
<i style="left:1715.6px;top:539px;width:11.4px;height:12px;background:#007435"></i>
<i style="left:1727px;top:539px;width:9.6px;height:12px;background:#009d48"></i>
<i style="left:1715.6px;top:551px;width:11.4px;height:10px;background:#13ac5a"></i>
<i style="left:1727px;top:551px;width:9.6px;height:10px;background:#13b05c"></i>
<i style="left:1717.5px;top:558.5px;width:9.5px;height:4.5px;background:#13ac5a"></i>
<i style="left:1727px;top:558.5px;width:12px;height:4.5px;background:#13b05c"></i>
<i style="left:1739px;top:558.5px;width:12px;height:4.5px;background:#13b45e"></i>
<i style="left:1751px;top:558.5px;width:6px;height:4.5px;background:#13b45e"></i>
<i style="left:1717.5px;top:563px;width:9.5px;height:12px;background:#00a94d"></i>
<i style="left:1727px;top:563px;width:12px;height:12px;background:#009f49"></i>
<i style="left:1739px;top:563px;width:12px;height:12px;background:#00a149"></i>
<i style="left:1751px;top:563px;width:6px;height:12px;background:#00a84d"></i>
<i style="left:1717.5px;top:575px;width:9.5px;height:12px;background:#009d48"></i>
<i style="left:1727px;top:575px;width:12px;height:12px;background:#007c39"></i>
<i style="left:1739px;top:575px;width:12px;height:12px;background:#00843c"></i>
<i style="left:1751px;top:575px;width:6px;height:12px;background:#00883e"></i>
<i style="left:1717.5px;top:587px;width:9.5px;height:12px;background:#13b45e"></i>
<i style="left:1727px;top:587px;width:12px;height:12px;background:#13b45e"></i>
<i style="left:1739px;top:587px;width:12px;height:12px;background:#13b45e"></i>
<i style="left:1751px;top:587px;width:6px;height:12px;background:#13b45e"></i>
<i style="left:1717.5px;top:599px;width:9.5px;height:5px;background:#009544"></i>
<i style="left:1727px;top:599px;width:12px;height:5px;background:#009745"></i>
<i style="left:1739px;top:599px;width:12px;height:5px;background:#009243"></i>
<i style="left:1751px;top:599px;width:6px;height:5px;background:#009644"></i>
<i style="left:1757px;top:581px;width:6px;height:6px;background:#00883e"></i>
<i style="left:1763px;top:581px;width:12px;height:6px;background:#00873e"></i>
<i style="left:1775px;top:581px;width:9px;height:6px;background:#009444"></i>
<i style="left:1757px;top:587px;width:6px;height:12px;background:#13b45e"></i>
<i style="left:1763px;top:587px;width:12px;height:12px;background:#13b45e"></i>
<i style="left:1775px;top:587px;width:9px;height:12px;background:#13b45e"></i>
<i style="left:1757px;top:599px;width:6px;height:5px;background:#009644"></i>
<i style="left:1763px;top:599px;width:12px;height:5px;background:#009946"></i>
<i style="left:1605px;top:537.6px;width:2px;height:1.4px;background:#25b96b"></i>
<i style="left:1607px;top:537.6px;width:12px;height:1.4px;background:#13b45e"></i>
<i style="left:1619px;top:537.6px;width:12px;height:1.4px;background:#13b45e"></i>
<i style="left:1631px;top:537.6px;width:12px;height:1.4px;background:#13b45e"></i>
<i style="left:1643px;top:537.6px;width:12px;height:1.4px;background:#13b45e"></i>
<i style="left:1655px;top:537.6px;width:12px;height:1.4px;background:#13b45e"></i>
<i style="left:1667px;top:537.6px;width:12px;height:1.4px;background:#13b45e"></i>
<i style="left:1679px;top:537.6px;width:12px;height:1.4px;background:#13b45e"></i>
<i style="left:1691px;top:537.6px;width:12px;height:1.4px;background:#13b45e"></i>
<i style="left:1703px;top:537.6px;width:12px;height:1.4px;background:#13b45e"></i>
<i style="left:1715px;top:537.6px;width:12px;height:1.4px;background:#13b45e"></i>
<i style="left:1605px;top:539px;width:2px;height:12px;background:#13ab5a"></i>
<i style="left:1607px;top:539px;width:12px;height:12px;background:#006f33"></i>
<i style="left:1619px;top:539px;width:12px;height:12px;background:#00833c"></i>
<i style="left:1631px;top:539px;width:12px;height:12px;background:#00803a"></i>
<i style="left:1643px;top:539px;width:12px;height:12px;background:#00803a"></i>
<i style="left:1655px;top:539px;width:12px;height:12px;background:#00883e"></i>
<i style="left:1667px;top:539px;width:12px;height:12px;background:#00813b"></i>
<i style="left:1679px;top:539px;width:12px;height:12px;background:#007837"></i>
<i style="left:1691px;top:539px;width:12px;height:12px;background:#00612c"></i>
<i style="left:1703px;top:539px;width:12px;height:12px;background:#007937"></i>
<i style="left:1715px;top:539px;width:12px;height:12px;background:#007435"></i>
<i style="left:1605px;top:551px;width:2px;height:1.8px;background:#25b86a"></i>
<i style="left:1607px;top:551px;width:12px;height:1.8px;background:#13a858"></i>
<i style="left:1619px;top:551px;width:12px;height:1.8px;background:#13a858"></i>
<i style="left:1631px;top:551px;width:12px;height:1.8px;background:#13ac5a"></i>
<i style="left:1643px;top:551px;width:12px;height:1.8px;background:#13a959"></i>
<i style="left:1655px;top:551px;width:12px;height:1.8px;background:#13ac5a"></i>
<i style="left:1667px;top:551px;width:12px;height:1.8px;background:#13ab5a"></i>
<i style="left:1679px;top:551px;width:12px;height:1.8px;background:#13a858"></i>
<i style="left:1691px;top:551px;width:12px;height:1.8px;background:#13aa59"></i>
<i style="left:1703px;top:551px;width:12px;height:1.8px;background:#13ab5a"></i>
<i style="left:1715px;top:551px;width:12px;height:1.8px;background:#13ac5a"></i>
<i style="left:1607px;top:596.6px;width:12px;height:2.4px;background:#13b45e"></i>
<i style="left:1619px;top:596.6px;width:12px;height:2.4px;background:#13b45e"></i>
<i style="left:1631px;top:596.6px;width:12px;height:2.4px;background:#13b45e"></i>
<i style="left:1643px;top:596.6px;width:12px;height:2.4px;background:#13b45e"></i>
<i style="left:1655px;top:596.6px;width:12px;height:2.4px;background:#13b45e"></i>
<i style="left:1667px;top:596.6px;width:12px;height:2.4px;background:#13b45e"></i>
<i style="left:1679px;top:596.6px;width:12px;height:2.4px;background:#13b45e"></i>
<i style="left:1691px;top:596.6px;width:12px;height:2.4px;background:#13b45e"></i>
<i style="left:1703px;top:596.6px;width:12px;height:2.4px;background:#13b45e"></i>
<i style="left:1715px;top:596.6px;width:12px;height:2.4px;background:#13b45e"></i>
<i style="left:1727px;top:596.6px;width:12px;height:2.4px;background:#13b45e"></i>
<i style="left:1739px;top:596.6px;width:12px;height:2.4px;background:#13b45e"></i>
<i style="left:1751px;top:596.6px;width:12px;height:2.4px;background:#13b45e"></i>
<i style="left:1763px;top:596.6px;width:12px;height:2.4px;background:#13b45e"></i>
<i style="left:1775px;top:596.6px;width:11px;height:2.4px;background:#13b45e"></i>
<i style="left:1607px;top:599px;width:12px;height:12px;background:#009042"></i>
<i style="left:1619px;top:599px;width:12px;height:12px;background:#009846"></i>
<i style="left:1631px;top:599px;width:12px;height:12px;background:#009444"></i>
<i style="left:1643px;top:599px;width:12px;height:12px;background:#009a46"></i>
<i style="left:1655px;top:599px;width:12px;height:12px;background:#009d48"></i>
<i style="left:1667px;top:599px;width:12px;height:12px;background:#009a46"></i>
<i style="left:1679px;top:599px;width:12px;height:12px;background:#009745"></i>
<i style="left:1691px;top:599px;width:12px;height:12px;background:#009444"></i>
<i style="left:1703px;top:599px;width:12px;height:12px;background:#008a3f"></i>
<i style="left:1715px;top:599px;width:12px;height:12px;background:#009544"></i>
<i style="left:1727px;top:599px;width:12px;height:12px;background:#009745"></i>
<i style="left:1739px;top:599px;width:12px;height:12px;background:#009243"></i>
<i style="left:1751px;top:599px;width:12px;height:12px;background:#009644"></i>
<i style="left:1763px;top:599px;width:12px;height:12px;background:#009946"></i>
<i style="left:1607px;top:611px;width:12px;height:11px;background:#00823b"></i>
<i style="left:1619px;top:611px;width:12px;height:11px;background:#008d41"></i>
<i style="left:1631px;top:611px;width:12px;height:11px;background:#009243"></i>
<i style="left:1643px;top:611px;width:12px;height:11px;background:#008a3f"></i>
<i style="left:1655px;top:611px;width:12px;height:11px;background:#009142"></i>
<i style="left:1667px;top:611px;width:12px;height:11px;background:#009243"></i>
<i style="left:1679px;top:611px;width:12px;height:11px;background:#009243"></i>
<i style="left:1691px;top:611px;width:12px;height:11px;background:#00863d"></i>
<i style="left:1703px;top:611px;width:12px;height:11px;background:#007736"></i>
<i style="left:1715px;top:611px;width:12px;height:11px;background:#008b3f"></i>
<i style="left:1727px;top:611px;width:12px;height:11px;background:#009142"></i>
<i style="left:1739px;top:611px;width:12px;height:11px;background:#00863d"></i>
<i style="left:1751px;top:611px;width:12px;height:11px;background:#008c40"></i>
<i style="left:1763px;top:611px;width:12px;height:11px;background:#008b40"></i>
<i style="left:1612px;top:622px;width:7px;height:1px;background:#00823b"></i>
<i style="left:1619px;top:622px;width:12px;height:1px;background:#008d41"></i>
<i style="left:1631px;top:622px;width:12px;height:1px;background:#009243"></i>
<i style="left:1643px;top:622px;width:12px;height:1px;background:#008a3f"></i>
<i style="left:1655px;top:622px;width:12px;height:1px;background:#009142"></i>
<i style="left:1667px;top:622px;width:12px;height:1px;background:#009243"></i>
<i style="left:1679px;top:622px;width:12px;height:1px;background:#009243"></i>
<i style="left:1691px;top:622px;width:12px;height:1px;background:#00863d"></i>
<i style="left:1703px;top:622px;width:12px;height:1px;background:#007736"></i>
<i style="left:1715px;top:622px;width:12px;height:1px;background:#008b3f"></i>
<i style="left:1727px;top:622px;width:12px;height:1px;background:#009142"></i>
<i style="left:1739px;top:622px;width:12px;height:1px;background:#00863d"></i>
<i style="left:1751px;top:622px;width:12px;height:1px;background:#008c40"></i>
<i style="left:1763px;top:622px;width:12px;height:1px;background:#008b40"></i>
<i style="left:1612px;top:623px;width:7px;height:3px;background:#a8e3c4"></i>
<i style="left:1619px;top:623px;width:12px;height:3px;background:#a8e3c4"></i>
<i style="left:1631px;top:623px;width:12px;height:3px;background:#a8e3c4"></i>
<i style="left:1643px;top:623px;width:12px;height:3px;background:#a8e3c4"></i>
<i style="left:1655px;top:623px;width:12px;height:3px;background:#a8e3c4"></i>
<i style="left:1667px;top:623px;width:12px;height:3px;background:#a8e3c4"></i>
<i style="left:1679px;top:623px;width:12px;height:3px;background:#a8e3c4"></i>
<i style="left:1691px;top:623px;width:12px;height:3px;background:#a8e3c4"></i>
<i style="left:1703px;top:623px;width:12px;height:3px;background:#a8e3c4"></i>
<i style="left:1715px;top:623px;width:12px;height:3px;background:#a8e3c4"></i>
<i style="left:1727px;top:623px;width:12px;height:3px;background:#a8e3c4"></i>
<i style="left:1739px;top:623px;width:12px;height:3px;background:#a8e3c4"></i>
<i style="left:1751px;top:623px;width:12px;height:3px;background:#a8e3c4"></i>
<i style="left:1763px;top:623px;width:12px;height:3px;background:#a8e3c4"></i>
<i style="left:1775px;top:623px;width:5px;height:3px;background:#a8e3c4"></i>
<i style="left:1630px;top:626px;width:1px;height:2.5px;background:#a8e3c4"></i>
<i style="left:1631px;top:626px;width:12px;height:2.5px;background:#a8e3c4"></i>
<i style="left:1643px;top:626px;width:12px;height:2.5px;background:#a8e3c4"></i>
<i style="left:1655px;top:626px;width:12px;height:2.5px;background:#a8e3c4"></i>
<i style="left:1667px;top:626px;width:12px;height:2.5px;background:#a8e3c4"></i>
<i style="left:1679px;top:626px;width:12px;height:2.5px;background:#a8e3c4"></i>
<i style="left:1691px;top:626px;width:12px;height:2.5px;background:#a8e3c4"></i>
<i style="left:1703px;top:626px;width:12px;height:2.5px;background:#a8e3c4"></i>
<i style="left:1715px;top:626px;width:12px;height:2.5px;background:#a8e3c4"></i>
<i style="left:1727px;top:626px;width:12px;height:2.5px;background:#a8e3c4"></i>
<i style="left:1739px;top:626px;width:12px;height:2.5px;background:#a8e3c4"></i>
<i style="left:1751px;top:626px;width:12px;height:2.5px;background:#a8e3c4"></i>
<i style="left:1763px;top:626px;width:2px;height:2.5px;background:#a8e3c4"></i>
</div>
<svg class="abs" style="left:0;top:0;pointer-events:none;z-index:9" width="1917" height="631" viewBox="0 0 1917 631">
  <!-- red annotation boxes -->
  <rect x="1678" y="99.8" width="225.5" height="27.8" rx="4" fill="none" stroke="#ff1b10" stroke-width="2.9"/>
  <rect x="243" y="298.7" width="342" height="28" rx="4" fill="none" stroke="#ff1b10" stroke-width="3"/>
  <!-- arrows -->
  <path d="M1470.8 73.1 L1656.5 98 L1654.6 94.2 L1665.1 102.5 L1652 107.9 L1655.8 104.2 Z" fill="#ff1b10"/>
  <path d="M62.8 231.1 L225 294 L223.3 290.2 L233 300.6 L217 302.7 L221.5 298.8 Z" fill="#ff1b10"/>
</svg>


</body>
</html>
